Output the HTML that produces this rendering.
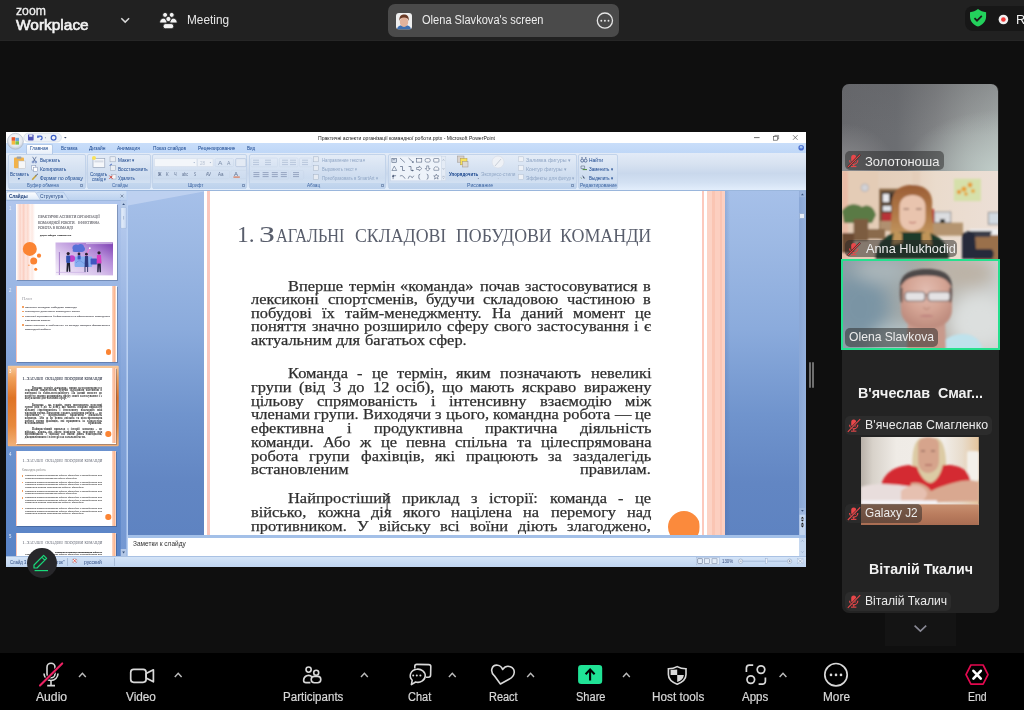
<!DOCTYPE html>
<html><head><meta charset="utf-8">
<style>
*{margin:0;padding:0;box-sizing:border-box}
html,body{width:1024px;height:710px;overflow:hidden;background:#0f0f0f;font-family:"Liberation Sans",sans-serif;position:relative}
.a{position:absolute}
svg{position:absolute;overflow:visible}
</style></head>
<body>
<div class="a" style="left:0;top:0;width:1024px;height:41px;background:#212121;border-bottom:1px solid #262626"></div>
<div class="a" style="left:15.90px;top:4.13px;font-size:100.8px;line-height:100.8px;white-space:pre;color:#f0f0f0;font-weight:normal;font-family:'Liberation Sans',sans-serif;transform-origin:0 0;transform:scale(0.12131,0.12500);-webkit-text-stroke:2.5px #f0f0f0;">zoom</div>
<div class="a" style="left:15.90px;top:16.93px;font-size:121.6px;line-height:121.6px;white-space:pre;color:#f2f2f2;font-weight:normal;font-family:'Liberation Sans',sans-serif;transform-origin:0 0;transform:scale(0.12706,0.12500);-webkit-text-stroke:5px #f2f2f2;">Workplace</div>
<svg style="left:0;top:0" width="1024" height="41"><path d="M121.3 18.2 L125.2 22.1 L129.1 18.2" fill="none" stroke="#d8d8d8" stroke-width="1.5"/><g fill="#f4f4f4" stroke="#212121" stroke-width=".9"><circle cx="165.1" cy="14.9" r="2.5"/><circle cx="171.7" cy="14.9" r="2.5"/><path d="M159.6 23 C159.6 19.4 162 18.2 163.4 18.2 C165 18.2 167 19.4 167 23 z"/><path d="M169.8 23 C169.8 19.4 171.8 18.2 173.4 18.2 C174.8 18.2 177.2 19.4 177.2 23 z"/><circle cx="168.4" cy="19" r="2.6"/><rect x="163" y="23.6" width="10.8" height="5.2" rx="2.6"/></g></svg>
<div class="a" style="left:186.50px;top:14.14px;font-size:96px;line-height:96px;white-space:pre;color:#e8e8e8;font-weight:normal;font-family:'Liberation Sans',sans-serif;transform-origin:0 0;transform:scale(0.12328,0.12500);">Meeting</div>
<div class="a" style="left:388px;top:4px;width:231px;height:33px;background:#4a4a4a;border-radius:7px"></div>
<svg style="left:395.6px;top:12.7px" width="16" height="16.6" viewBox="0 0 16 16.6"><defs><clipPath id="avc"><rect width="16" height="16.6" rx="3"/></clipPath><filter id="avb"><feGaussianBlur stdDeviation=".35"/></filter></defs><g clip-path="url(#avc)"><rect width="16" height="16.6" fill="#efefef"/><g filter="url(#avb)"><path d="M1 16.6 C1.5 13 4 12 8 12 C12 12 14.5 13 15 16.6 Z" fill="#3f6fb0"/><ellipse cx="8" cy="9" rx="4.2" ry="5" fill="#e2b39c"/><path d="M3.4 8 C3 3.6 5 1.6 8 1.6 C11 1.6 13.2 3.4 12.8 8 C12 5.4 10.6 4.6 8 4.6 C5.4 4.6 4 5.4 3.4 8 Z" fill="#6b3a26"/></g></g></svg>
<div class="a" style="left:421.50px;top:14.24px;font-size:96px;line-height:96px;white-space:pre;color:#ececec;font-weight:normal;font-family:'Liberation Sans',sans-serif;transform-origin:0 0;transform:scale(0.11533,0.12500);">Olena Slavkova's screen</div>
<svg style="left:0;top:0" width="1024" height="41"><circle cx="604.9" cy="20.6" r="7.6" fill="none" stroke="#e6e6e6" stroke-width="1.3"/><circle cx="601.3" cy="20.8" r="0.95" fill="#e6e6e6"/><circle cx="604.9" cy="20.8" r="0.95" fill="#e6e6e6"/><circle cx="608.5" cy="20.8" r="0.95" fill="#e6e6e6"/></svg>
<div class="a" style="left:965px;top:6px;width:80px;height:25px;background:#171717;border-radius:8px"></div>
<svg style="left:0;top:0" width="1024" height="41"><path d="M978 9.1 C980.5 11 983 11.8 986.1 12.3 L986.1 16.5 C986.1 21.5 982.5 25 978 26.6 C973.5 25 970 21.5 970 16.5 L970 12.3 C973 11.8 975.5 11 978 9.1 Z" fill="#23d15c"/><path d="M974.5 18.2 L977 20.7 L981.8 15.9" fill="none" stroke="#1a1a1a" stroke-width="1.7"/><circle cx="1003.4" cy="19.5" r="4.8" fill="#f0f0f0"/><circle cx="1003.4" cy="19.5" r="2.3" fill="#f23a3a"/></svg>
<div class="a" style="left:1015.60px;top:13.02px;font-size:100.0px;line-height:100.0px;white-space:pre;color:#f0f0f0;font-weight:normal;font-family:'Liberation Sans',sans-serif;transform-origin:0 0;transform:scale(0.12830,0.12500);">Re</div>
<div class="a" style="left:0;top:0;width:1024px;height:710px;clip-path:inset(132px 218px 143px 6px);will-change:transform">
<div class="a" style="left:6px;top:132px;width:800px;height:435px;background:#fff"></div>
<div class="a" style="left:6px;top:143px;width:800px;height:10px;background:linear-gradient(#c9defa,#bfd7f7)"></div>
<div class="a" style="left:6px;top:153px;width:800px;height:37px;background:linear-gradient(#e3ebf7 0%,#d7e2f1 30%,#c9d8ec 55%,#d3e1f3 80%,#e3eefc 100%)"></div>
<div class="a" style="left:6px;top:190px;width:800px;height:1px;background:#9ab6dc"></div>
<div class="a" style="left:6px;top:191px;width:121px;height:366px;background:linear-gradient(#a2bde6,#8eaadb 50%,#7f9fd3)"></div>
<div class="a" style="left:127px;top:191px;width:1px;height:366px;background:#b9d0f2"></div>
<div class="a" style="left:128px;top:191px;width:672px;height:344px;background:linear-gradient(#a6c0e9 0%,#9db9e4 15%,#8babdc 40%,#7094cd 65%,#6286c3 85%,#5e83c1 100%)"></div>
<svg style="left:0;top:0" width="1024" height="710"><path d="M128 191 L204 191 L204 191.6 L128 205.4 Z" fill="#c3d5f1" opacity=".8"/></svg>
<div class="a" style="left:725px;top:191px;width:5px;height:344px;background:linear-gradient(90deg,rgba(60,90,150,.18),rgba(60,90,150,0))"></div>
<div class="a" style="left:799px;top:191px;width:7px;height:345px;background:linear-gradient(90deg,#8aa7d6,#95b1dd)"></div>
<div class="a" style="left:799.4px;top:213px;width:6px;height:6px;background:#e8eef8;border:.5px solid #9ab2d6"></div>
<div class="a" style="left:128px;top:535px;width:678px;height:3px;background:#a3c0e8"></div>
<div class="a" style="left:128px;top:538px;width:671px;height:18px;background:#fff"></div>
<div class="a" style="left:799px;top:538px;width:7px;height:18px;background:#c6d8f0"></div>
<div class="a" style="left:6px;top:556px;width:800px;height:11px;background:linear-gradient(#d6e5f8,#c0d5f0)"></div>
<div class="a" style="left:204px;top:191px;width:521px;height:344px;background:#fff"></div>
<div class="a" style="left:207px;top:191px;width:2.5px;height:344px;background:#fbc7bd"></div>
<div class="a" style="left:701.7px;top:191px;width:2.3px;height:344px;background:#fcc9bd"></div>
<div class="a" style="left:707px;top:191px;width:17.6px;height:344px;background:linear-gradient(90deg,#fcd3c5 0,#fcd3c5 25%,#fac5b3 25%,#fac5b3 45%,#fccfc0 45%,#fccfc0 70%,#fbc4b2 70%,#fbc4b2 85%,#fdd0c2 85%)"></div>
<div class="a" style="left:667.5px;top:511px;width:32px;height:32px;border-radius:50%;background:#fb8a3c;clip-path:inset(0 0 8px 0)"></div>
<div class="a" style="left:237.20px;top:222.22px;font-size:188.0px;line-height:188.0px;white-space:pre;color:#595e6c;font-weight:normal;font-family:'Liberation Serif',serif;transform-origin:0 0;transform:scale(0.12500,0.12500);">1.</div>
<div class="a" style="left:259.00px;top:222.22px;font-size:188.0px;line-height:188.0px;white-space:pre;color:#595e6c;font-weight:normal;font-family:'Liberation Serif',serif;transform-origin:0 0;transform:scale(0.16989,0.12500);">З</div>
<div class="a" style="left:275.50px;top:226.99px;font-size:142.4px;line-height:142.4px;white-space:pre;color:#595e6c;font-weight:normal;font-family:'Liberation Serif',serif;transform-origin:0 0;transform:scale(0.11379,0.12500);">АГАЛЬНІ</div>
<div class="a" style="left:354.60px;top:226.99px;font-size:142.4px;line-height:142.4px;white-space:pre;color:#595e6c;font-weight:normal;font-family:'Liberation Serif',serif;transform-origin:0 0;transform:scale(0.12476,0.12500);">СКЛАДОВІ</div>
<div class="a" style="left:456.00px;top:226.99px;font-size:142.4px;line-height:142.4px;white-space:pre;color:#595e6c;font-weight:normal;font-family:'Liberation Serif',serif;transform-origin:0 0;transform:scale(0.12483,0.12500);">ПОБУДОВИ</div>
<div class="a" style="left:560.30px;top:226.99px;font-size:142.4px;line-height:142.4px;white-space:pre;color:#595e6c;font-weight:normal;font-family:'Liberation Serif',serif;transform-origin:0 0;transform:scale(0.12566,0.12500);">КОМАНДИ</div>
<div class="a" style="left:287.70px;top:277.65px;font-size:120.8px;line-height:120.8px;white-space:pre;color:#2e2e2e;font-weight:normal;font-family:'Liberation Serif',serif;transform-origin:0 0;transform:scale(0.13583,0.12500);-webkit-text-stroke:2.0px #2e2e2e;">Вперше</div>
<div class="a" style="left:348.55px;top:277.65px;font-size:120.8px;line-height:120.8px;white-space:pre;color:#2e2e2e;font-weight:normal;font-family:'Liberation Serif',serif;transform-origin:0 0;transform:scale(0.13583,0.12500);-webkit-text-stroke:2.0px #2e2e2e;">термін</div>
<div class="a" style="left:400.39px;top:277.65px;font-size:120.8px;line-height:120.8px;white-space:pre;color:#2e2e2e;font-weight:normal;font-family:'Liberation Serif',serif;transform-origin:0 0;transform:scale(0.13583,0.12500);-webkit-text-stroke:2.0px #2e2e2e;">«команда»</div>
<div class="a" style="left:479.51px;top:277.65px;font-size:120.8px;line-height:120.8px;white-space:pre;color:#2e2e2e;font-weight:normal;font-family:'Liberation Serif',serif;transform-origin:0 0;transform:scale(0.13583,0.12500);-webkit-text-stroke:2.0px #2e2e2e;">почав</div>
<div class="a" style="left:525.07px;top:277.65px;font-size:120.8px;line-height:120.8px;white-space:pre;color:#2e2e2e;font-weight:normal;font-family:'Liberation Serif',serif;transform-origin:0 0;transform:scale(0.13583,0.12500);-webkit-text-stroke:2.0px #2e2e2e;">застосовуватися</div>
<div class="a" style="left:643.45px;top:277.65px;font-size:120.8px;line-height:120.8px;white-space:pre;color:#2e2e2e;font-weight:normal;font-family:'Liberation Serif',serif;transform-origin:0 0;transform:scale(0.13583,0.12500);-webkit-text-stroke:2.0px #2e2e2e;">в</div>
<div class="a" style="left:251.30px;top:291.25px;font-size:120.8px;line-height:120.8px;white-space:pre;color:#2e2e2e;font-weight:normal;font-family:'Liberation Serif',serif;transform-origin:0 0;transform:scale(0.13583,0.12500);-webkit-text-stroke:2.0px #2e2e2e;">лексиконі</div>
<div class="a" style="left:327.63px;top:291.25px;font-size:120.8px;line-height:120.8px;white-space:pre;color:#2e2e2e;font-weight:normal;font-family:'Liberation Serif',serif;transform-origin:0 0;transform:scale(0.13583,0.12500);-webkit-text-stroke:2.0px #2e2e2e;">спортсменів,</div>
<div class="a" style="left:425.94px;top:291.25px;font-size:120.8px;line-height:120.8px;white-space:pre;color:#2e2e2e;font-weight:normal;font-family:'Liberation Serif',serif;transform-origin:0 0;transform:scale(0.13583,0.12500);-webkit-text-stroke:2.0px #2e2e2e;">будучи</div>
<div class="a" style="left:482.97px;top:291.25px;font-size:120.8px;line-height:120.8px;white-space:pre;color:#2e2e2e;font-weight:normal;font-family:'Liberation Serif',serif;transform-origin:0 0;transform:scale(0.13583,0.12500);-webkit-text-stroke:2.0px #2e2e2e;">складовою</div>
<div class="a" style="left:566.89px;top:291.25px;font-size:120.8px;line-height:120.8px;white-space:pre;color:#2e2e2e;font-weight:normal;font-family:'Liberation Serif',serif;transform-origin:0 0;transform:scale(0.13583,0.12500);-webkit-text-stroke:2.0px #2e2e2e;">частиною</div>
<div class="a" style="left:643.45px;top:291.25px;font-size:120.8px;line-height:120.8px;white-space:pre;color:#2e2e2e;font-weight:normal;font-family:'Liberation Serif',serif;transform-origin:0 0;transform:scale(0.13583,0.12500);-webkit-text-stroke:2.0px #2e2e2e;">в</div>
<div class="a" style="left:251.30px;top:304.85px;font-size:120.8px;line-height:120.8px;white-space:pre;color:#2e2e2e;font-weight:normal;font-family:'Liberation Serif',serif;transform-origin:0 0;transform:scale(0.13583,0.12500);-webkit-text-stroke:2.0px #2e2e2e;">побудові</div>
<div class="a" style="left:322.17px;top:304.85px;font-size:120.8px;line-height:120.8px;white-space:pre;color:#2e2e2e;font-weight:normal;font-family:'Liberation Serif',serif;transform-origin:0 0;transform:scale(0.13583,0.12500);-webkit-text-stroke:2.0px #2e2e2e;">їх</div>
<div class="a" style="left:345.06px;top:304.85px;font-size:120.8px;line-height:120.8px;white-space:pre;color:#2e2e2e;font-weight:normal;font-family:'Liberation Serif',serif;transform-origin:0 0;transform:scale(0.13583,0.12500);-webkit-text-stroke:2.0px #2e2e2e;">тайм-менеджменту.</div>
<div class="a" style="left:491.74px;top:304.85px;font-size:120.8px;line-height:120.8px;white-space:pre;color:#2e2e2e;font-weight:normal;font-family:'Liberation Serif',serif;transform-origin:0 0;transform:scale(0.13583,0.12500);-webkit-text-stroke:2.0px #2e2e2e;">На</div>
<div class="a" style="left:521.01px;top:304.85px;font-size:120.8px;line-height:120.8px;white-space:pre;color:#2e2e2e;font-weight:normal;font-family:'Liberation Serif',serif;transform-origin:0 0;transform:scale(0.13583,0.12500);-webkit-text-stroke:2.0px #2e2e2e;">даний</div>
<div class="a" style="left:573.11px;top:304.85px;font-size:120.8px;line-height:120.8px;white-space:pre;color:#2e2e2e;font-weight:normal;font-family:'Liberation Serif',serif;transform-origin:0 0;transform:scale(0.13583,0.12500);-webkit-text-stroke:2.0px #2e2e2e;">момент</div>
<div class="a" style="left:635.14px;top:304.85px;font-size:120.8px;line-height:120.8px;white-space:pre;color:#2e2e2e;font-weight:normal;font-family:'Liberation Serif',serif;transform-origin:0 0;transform:scale(0.13583,0.12500);-webkit-text-stroke:2.0px #2e2e2e;">це</div>
<div class="a" style="left:251.30px;top:318.45px;font-size:120.8px;line-height:120.8px;white-space:pre;color:#2e2e2e;font-weight:normal;font-family:'Liberation Serif',serif;transform-origin:0 0;transform:scale(0.13583,0.12500);-webkit-text-stroke:2.0px #2e2e2e;">поняття</div>
<div class="a" style="left:311.64px;top:318.45px;font-size:120.8px;line-height:120.8px;white-space:pre;color:#2e2e2e;font-weight:normal;font-family:'Liberation Serif',serif;transform-origin:0 0;transform:scale(0.13583,0.12500);-webkit-text-stroke:2.0px #2e2e2e;">значно</div>
<div class="a" style="left:364.11px;top:318.45px;font-size:120.8px;line-height:120.8px;white-space:pre;color:#2e2e2e;font-weight:normal;font-family:'Liberation Serif',serif;transform-origin:0 0;transform:scale(0.13583,0.12500);-webkit-text-stroke:2.0px #2e2e2e;">розширило</div>
<div class="a" style="left:447.15px;top:318.45px;font-size:120.8px;line-height:120.8px;white-space:pre;color:#2e2e2e;font-weight:normal;font-family:'Liberation Serif',serif;transform-origin:0 0;transform:scale(0.13583,0.12500);-webkit-text-stroke:2.0px #2e2e2e;">сферу</div>
<div class="a" style="left:494.09px;top:318.45px;font-size:120.8px;line-height:120.8px;white-space:pre;color:#2e2e2e;font-weight:normal;font-family:'Liberation Serif',serif;transform-origin:0 0;transform:scale(0.13583,0.12500);-webkit-text-stroke:2.0px #2e2e2e;">свого</div>
<div class="a" style="left:537.09px;top:318.45px;font-size:120.8px;line-height:120.8px;white-space:pre;color:#2e2e2e;font-weight:normal;font-family:'Liberation Serif',serif;transform-origin:0 0;transform:scale(0.13583,0.12500);-webkit-text-stroke:2.0px #2e2e2e;">застосування</div>
<div class="a" style="left:634.25px;top:318.45px;font-size:120.8px;line-height:120.8px;white-space:pre;color:#2e2e2e;font-weight:normal;font-family:'Liberation Serif',serif;transform-origin:0 0;transform:scale(0.13583,0.12500);-webkit-text-stroke:2.0px #2e2e2e;">і</div>
<div class="a" style="left:644.16px;top:318.45px;font-size:120.8px;line-height:120.8px;white-space:pre;color:#2e2e2e;font-weight:normal;font-family:'Liberation Serif',serif;transform-origin:0 0;transform:scale(0.13583,0.12500);-webkit-text-stroke:2.0px #2e2e2e;">є</div>
<div class="a" style="left:251.30px;top:332.05px;font-size:120.8px;line-height:120.8px;white-space:pre;color:#2e2e2e;font-weight:normal;font-family:'Liberation Serif',serif;transform-origin:0 0;transform:scale(0.13583,0.12500);-webkit-text-stroke:2.0px #2e2e2e;">актуальним</div>
<div class="a" style="left:336.43px;top:332.05px;font-size:120.8px;line-height:120.8px;white-space:pre;color:#2e2e2e;font-weight:normal;font-family:'Liberation Serif',serif;transform-origin:0 0;transform:scale(0.13583,0.12500);-webkit-text-stroke:2.0px #2e2e2e;">для</div>
<div class="a" style="left:364.62px;top:332.05px;font-size:120.8px;line-height:120.8px;white-space:pre;color:#2e2e2e;font-weight:normal;font-family:'Liberation Serif',serif;transform-origin:0 0;transform:scale(0.13583,0.12500);-webkit-text-stroke:2.0px #2e2e2e;">багатьох</div>
<div class="a" style="left:428.59px;top:332.05px;font-size:120.8px;line-height:120.8px;white-space:pre;color:#2e2e2e;font-weight:normal;font-family:'Liberation Serif',serif;transform-origin:0 0;transform:scale(0.13583,0.12500);-webkit-text-stroke:2.0px #2e2e2e;">сфер.</div>
<div class="a" style="left:287.70px;top:365.05px;font-size:120.8px;line-height:120.8px;white-space:pre;color:#2e2e2e;font-weight:normal;font-family:'Liberation Serif',serif;transform-origin:0 0;transform:scale(0.13583,0.12500);-webkit-text-stroke:2.0px #2e2e2e;">Команда</div>
<div class="a" style="left:356.93px;top:365.05px;font-size:120.8px;line-height:120.8px;white-space:pre;color:#2e2e2e;font-weight:normal;font-family:'Liberation Serif',serif;transform-origin:0 0;transform:scale(0.13583,0.12500);-webkit-text-stroke:2.0px #2e2e2e;">-</div>
<div class="a" style="left:371.64px;top:365.05px;font-size:120.8px;line-height:120.8px;white-space:pre;color:#2e2e2e;font-weight:normal;font-family:'Liberation Serif',serif;transform-origin:0 0;transform:scale(0.13583,0.12500);-webkit-text-stroke:2.0px #2e2e2e;">це</div>
<div class="a" style="left:396.94px;top:365.05px;font-size:120.8px;line-height:120.8px;white-space:pre;color:#2e2e2e;font-weight:normal;font-family:'Liberation Serif',serif;transform-origin:0 0;transform:scale(0.13583,0.12500);-webkit-text-stroke:2.0px #2e2e2e;">термін,</div>
<div class="a" style="left:456.42px;top:365.05px;font-size:120.8px;line-height:120.8px;white-space:pre;color:#2e2e2e;font-weight:normal;font-family:'Liberation Serif',serif;transform-origin:0 0;transform:scale(0.13583,0.12500);-webkit-text-stroke:2.0px #2e2e2e;">яким</div>
<div class="a" style="left:500.35px;top:365.05px;font-size:120.8px;line-height:120.8px;white-space:pre;color:#2e2e2e;font-weight:normal;font-family:'Liberation Serif',serif;transform-origin:0 0;transform:scale(0.13583,0.12500);-webkit-text-stroke:2.0px #2e2e2e;">позначають</div>
<div class="a" style="left:590.70px;top:365.05px;font-size:120.8px;line-height:120.8px;white-space:pre;color:#2e2e2e;font-weight:normal;font-family:'Liberation Serif',serif;transform-origin:0 0;transform:scale(0.13583,0.12500);-webkit-text-stroke:2.0px #2e2e2e;">невеликі</div>
<div class="a" style="left:251.30px;top:378.80px;font-size:120.8px;line-height:120.8px;white-space:pre;color:#2e2e2e;font-weight:normal;font-family:'Liberation Serif',serif;transform-origin:0 0;transform:scale(0.13583,0.12500);-webkit-text-stroke:2.0px #2e2e2e;">групи</div>
<div class="a" style="left:299.24px;top:378.80px;font-size:120.8px;line-height:120.8px;white-space:pre;color:#2e2e2e;font-weight:normal;font-family:'Liberation Serif',serif;transform-origin:0 0;transform:scale(0.13583,0.12500);-webkit-text-stroke:2.0px #2e2e2e;">(від</div>
<div class="a" style="left:332.82px;top:378.80px;font-size:120.8px;line-height:120.8px;white-space:pre;color:#2e2e2e;font-weight:normal;font-family:'Liberation Serif',serif;transform-origin:0 0;transform:scale(0.13583,0.12500);-webkit-text-stroke:2.0px #2e2e2e;">3</div>
<div class="a" style="left:348.49px;top:378.80px;font-size:120.8px;line-height:120.8px;white-space:pre;color:#2e2e2e;font-weight:normal;font-family:'Liberation Serif',serif;transform-origin:0 0;transform:scale(0.13583,0.12500);-webkit-text-stroke:2.0px #2e2e2e;">до</div>
<div class="a" style="left:372.50px;top:378.80px;font-size:120.8px;line-height:120.8px;white-space:pre;color:#2e2e2e;font-weight:normal;font-family:'Liberation Serif',serif;transform-origin:0 0;transform:scale(0.13583,0.12500);-webkit-text-stroke:2.0px #2e2e2e;">12</div>
<div class="a" style="left:396.37px;top:378.80px;font-size:120.8px;line-height:120.8px;white-space:pre;color:#2e2e2e;font-weight:normal;font-family:'Liberation Serif',serif;transform-origin:0 0;transform:scale(0.13583,0.12500);-webkit-text-stroke:2.0px #2e2e2e;">осіб),</div>
<div class="a" style="left:442.20px;top:378.80px;font-size:120.8px;line-height:120.8px;white-space:pre;color:#2e2e2e;font-weight:normal;font-family:'Liberation Serif',serif;transform-origin:0 0;transform:scale(0.13583,0.12500);-webkit-text-stroke:2.0px #2e2e2e;">що</div>
<div class="a" style="left:470.49px;top:378.80px;font-size:120.8px;line-height:120.8px;white-space:pre;color:#2e2e2e;font-weight:normal;font-family:'Liberation Serif',serif;transform-origin:0 0;transform:scale(0.13583,0.12500);-webkit-text-stroke:2.0px #2e2e2e;">мають</div>
<div class="a" style="left:522.20px;top:378.80px;font-size:120.8px;line-height:120.8px;white-space:pre;color:#2e2e2e;font-weight:normal;font-family:'Liberation Serif',serif;transform-origin:0 0;transform:scale(0.13583,0.12500);-webkit-text-stroke:2.0px #2e2e2e;">яскраво</div>
<div class="a" style="left:583.79px;top:378.80px;font-size:120.8px;line-height:120.8px;white-space:pre;color:#2e2e2e;font-weight:normal;font-family:'Liberation Serif',serif;transform-origin:0 0;transform:scale(0.13583,0.12500);-webkit-text-stroke:2.0px #2e2e2e;">виражену</div>
<div class="a" style="left:251.30px;top:392.55px;font-size:120.8px;line-height:120.8px;white-space:pre;color:#2e2e2e;font-weight:normal;font-family:'Liberation Serif',serif;transform-origin:0 0;transform:scale(0.13583,0.12500);-webkit-text-stroke:2.0px #2e2e2e;">цільову</div>
<div class="a" style="left:317.26px;top:392.55px;font-size:120.8px;line-height:120.8px;white-space:pre;color:#2e2e2e;font-weight:normal;font-family:'Liberation Serif',serif;transform-origin:0 0;transform:scale(0.13583,0.12500);-webkit-text-stroke:2.0px #2e2e2e;">спрямованість</div>
<div class="a" style="left:431.10px;top:392.55px;font-size:120.8px;line-height:120.8px;white-space:pre;color:#2e2e2e;font-weight:normal;font-family:'Liberation Serif',serif;transform-origin:0 0;transform:scale(0.13583,0.12500);-webkit-text-stroke:2.0px #2e2e2e;">і</div>
<div class="a" style="left:449.01px;top:392.55px;font-size:120.8px;line-height:120.8px;white-space:pre;color:#2e2e2e;font-weight:normal;font-family:'Liberation Serif',serif;transform-origin:0 0;transform:scale(0.13583,0.12500);-webkit-text-stroke:2.0px #2e2e2e;">інтенсивну</div>
<div class="a" style="left:539.74px;top:392.55px;font-size:120.8px;line-height:120.8px;white-space:pre;color:#2e2e2e;font-weight:normal;font-family:'Liberation Serif',serif;transform-origin:0 0;transform:scale(0.13583,0.12500);-webkit-text-stroke:2.0px #2e2e2e;">взаємодію</div>
<div class="a" style="left:624.92px;top:392.55px;font-size:120.8px;line-height:120.8px;white-space:pre;color:#2e2e2e;font-weight:normal;font-family:'Liberation Serif',serif;transform-origin:0 0;transform:scale(0.13583,0.12500);-webkit-text-stroke:2.0px #2e2e2e;">між</div>
<div class="a" style="left:251.30px;top:406.30px;font-size:120.8px;line-height:120.8px;white-space:pre;color:#2e2e2e;font-weight:normal;font-family:'Liberation Serif',serif;transform-origin:0 0;transform:scale(0.13583,0.12500);-webkit-text-stroke:2.0px #2e2e2e;">членами</div>
<div class="a" style="left:314.40px;top:406.30px;font-size:120.8px;line-height:120.8px;white-space:pre;color:#2e2e2e;font-weight:normal;font-family:'Liberation Serif',serif;transform-origin:0 0;transform:scale(0.13583,0.12500);-webkit-text-stroke:2.0px #2e2e2e;">групи.</div>
<div class="a" style="left:363.13px;top:406.30px;font-size:120.8px;line-height:120.8px;white-space:pre;color:#2e2e2e;font-weight:normal;font-family:'Liberation Serif',serif;transform-origin:0 0;transform:scale(0.13583,0.12500);-webkit-text-stroke:2.0px #2e2e2e;">Виходячи</div>
<div class="a" style="left:435.24px;top:406.30px;font-size:120.8px;line-height:120.8px;white-space:pre;color:#2e2e2e;font-weight:normal;font-family:'Liberation Serif',serif;transform-origin:0 0;transform:scale(0.13583,0.12500);-webkit-text-stroke:2.0px #2e2e2e;">з</div>
<div class="a" style="left:445.87px;top:406.30px;font-size:120.8px;line-height:120.8px;white-space:pre;color:#2e2e2e;font-weight:normal;font-family:'Liberation Serif',serif;transform-origin:0 0;transform:scale(0.13583,0.12500);-webkit-text-stroke:2.0px #2e2e2e;">цього,</div>
<div class="a" style="left:493.11px;top:406.30px;font-size:120.8px;line-height:120.8px;white-space:pre;color:#2e2e2e;font-weight:normal;font-family:'Liberation Serif',serif;transform-origin:0 0;transform:scale(0.13583,0.12500);-webkit-text-stroke:2.0px #2e2e2e;">командна</div>
<div class="a" style="left:563.04px;top:406.30px;font-size:120.8px;line-height:120.8px;white-space:pre;color:#2e2e2e;font-weight:normal;font-family:'Liberation Serif',serif;transform-origin:0 0;transform:scale(0.13583,0.12500);-webkit-text-stroke:2.0px #2e2e2e;">робота</div>
<div class="a" style="left:614.58px;top:406.30px;font-size:120.8px;line-height:120.8px;white-space:pre;color:#2e2e2e;font-weight:normal;font-family:'Liberation Serif',serif;transform-origin:0 0;transform:scale(0.13583,0.12500);-webkit-text-stroke:2.0px #2e2e2e;">—</div>
<div class="a" style="left:635.14px;top:406.30px;font-size:120.8px;line-height:120.8px;white-space:pre;color:#2e2e2e;font-weight:normal;font-family:'Liberation Serif',serif;transform-origin:0 0;transform:scale(0.13583,0.12500);-webkit-text-stroke:2.0px #2e2e2e;">це</div>
<div class="a" style="left:251.30px;top:420.05px;font-size:120.8px;line-height:120.8px;white-space:pre;color:#2e2e2e;font-weight:normal;font-family:'Liberation Serif',serif;transform-origin:0 0;transform:scale(0.13583,0.12500);-webkit-text-stroke:2.0px #2e2e2e;">ефективна</div>
<div class="a" style="left:346.70px;top:420.05px;font-size:120.8px;line-height:120.8px;white-space:pre;color:#2e2e2e;font-weight:normal;font-family:'Liberation Serif',serif;transform-origin:0 0;transform:scale(0.13583,0.12500);-webkit-text-stroke:2.0px #2e2e2e;">і</div>
<div class="a" style="left:373.75px;top:420.05px;font-size:120.8px;line-height:120.8px;white-space:pre;color:#2e2e2e;font-weight:normal;font-family:'Liberation Serif',serif;transform-origin:0 0;transform:scale(0.13583,0.12500);-webkit-text-stroke:2.0px #2e2e2e;">продуктивна</div>
<div class="a" style="left:485.02px;top:420.05px;font-size:120.8px;line-height:120.8px;white-space:pre;color:#2e2e2e;font-weight:normal;font-family:'Liberation Serif',serif;transform-origin:0 0;transform:scale(0.13583,0.12500);-webkit-text-stroke:2.0px #2e2e2e;">практична</div>
<div class="a" style="left:579.80px;top:420.05px;font-size:120.8px;line-height:120.8px;white-space:pre;color:#2e2e2e;font-weight:normal;font-family:'Liberation Serif',serif;transform-origin:0 0;transform:scale(0.13583,0.12500);-webkit-text-stroke:2.0px #2e2e2e;">діяльність</div>
<div class="a" style="left:251.30px;top:433.80px;font-size:120.8px;line-height:120.8px;white-space:pre;color:#2e2e2e;font-weight:normal;font-family:'Liberation Serif',serif;transform-origin:0 0;transform:scale(0.13583,0.12500);-webkit-text-stroke:2.0px #2e2e2e;">команди.</div>
<div class="a" style="left:323.17px;top:433.80px;font-size:120.8px;line-height:120.8px;white-space:pre;color:#2e2e2e;font-weight:normal;font-family:'Liberation Serif',serif;transform-origin:0 0;transform:scale(0.13583,0.12500);-webkit-text-stroke:2.0px #2e2e2e;">Або</div>
<div class="a" style="left:360.02px;top:433.80px;font-size:120.8px;line-height:120.8px;white-space:pre;color:#2e2e2e;font-weight:normal;font-family:'Liberation Serif',serif;transform-origin:0 0;transform:scale(0.13583,0.12500);-webkit-text-stroke:2.0px #2e2e2e;">ж</div>
<div class="a" style="left:380.63px;top:433.80px;font-size:120.8px;line-height:120.8px;white-space:pre;color:#2e2e2e;font-weight:normal;font-family:'Liberation Serif',serif;transform-origin:0 0;transform:scale(0.13583,0.12500);-webkit-text-stroke:2.0px #2e2e2e;">це</div>
<div class="a" style="left:405.97px;top:433.80px;font-size:120.8px;line-height:120.8px;white-space:pre;color:#2e2e2e;font-weight:normal;font-family:'Liberation Serif',serif;transform-origin:0 0;transform:scale(0.13583,0.12500);-webkit-text-stroke:2.0px #2e2e2e;">певна</div>
<div class="a" style="left:455.13px;top:433.80px;font-size:120.8px;line-height:120.8px;white-space:pre;color:#2e2e2e;font-weight:normal;font-family:'Liberation Serif',serif;transform-origin:0 0;transform:scale(0.13583,0.12500);-webkit-text-stroke:2.0px #2e2e2e;">спільна</div>
<div class="a" style="left:516.77px;top:433.80px;font-size:120.8px;line-height:120.8px;white-space:pre;color:#2e2e2e;font-weight:normal;font-family:'Liberation Serif',serif;transform-origin:0 0;transform:scale(0.13583,0.12500);-webkit-text-stroke:2.0px #2e2e2e;">та</div>
<div class="a" style="left:540.70px;top:433.80px;font-size:120.8px;line-height:120.8px;white-space:pre;color:#2e2e2e;font-weight:normal;font-family:'Liberation Serif',serif;transform-origin:0 0;transform:scale(0.13583,0.12500);-webkit-text-stroke:2.0px #2e2e2e;">цілеспрямована</div>
<div class="a" style="left:251.30px;top:447.55px;font-size:120.8px;line-height:120.8px;white-space:pre;color:#2e2e2e;font-weight:normal;font-family:'Liberation Serif',serif;transform-origin:0 0;transform:scale(0.13583,0.12500);-webkit-text-stroke:2.0px #2e2e2e;">робота</div>
<div class="a" style="left:309.41px;top:447.55px;font-size:120.8px;line-height:120.8px;white-space:pre;color:#2e2e2e;font-weight:normal;font-family:'Liberation Serif',serif;transform-origin:0 0;transform:scale(0.13583,0.12500);-webkit-text-stroke:2.0px #2e2e2e;">групи</div>
<div class="a" style="left:360.60px;top:447.55px;font-size:120.8px;line-height:120.8px;white-space:pre;color:#2e2e2e;font-weight:normal;font-family:'Liberation Serif',serif;transform-origin:0 0;transform:scale(0.13583,0.12500);-webkit-text-stroke:2.0px #2e2e2e;">фахівців,</div>
<div class="a" style="left:434.92px;top:447.55px;font-size:120.8px;line-height:120.8px;white-space:pre;color:#2e2e2e;font-weight:normal;font-family:'Liberation Serif',serif;transform-origin:0 0;transform:scale(0.13583,0.12500);-webkit-text-stroke:2.0px #2e2e2e;">які</div>
<div class="a" style="left:465.70px;top:447.55px;font-size:120.8px;line-height:120.8px;white-space:pre;color:#2e2e2e;font-weight:normal;font-family:'Liberation Serif',serif;transform-origin:0 0;transform:scale(0.13583,0.12500);-webkit-text-stroke:2.0px #2e2e2e;">працюють</div>
<div class="a" style="left:548.41px;top:447.55px;font-size:120.8px;line-height:120.8px;white-space:pre;color:#2e2e2e;font-weight:normal;font-family:'Liberation Serif',serif;transform-origin:0 0;transform:scale(0.13583,0.12500);-webkit-text-stroke:2.0px #2e2e2e;">за</div>
<div class="a" style="left:572.89px;top:447.55px;font-size:120.8px;line-height:120.8px;white-space:pre;color:#2e2e2e;font-weight:normal;font-family:'Liberation Serif',serif;transform-origin:0 0;transform:scale(0.13583,0.12500);-webkit-text-stroke:2.0px #2e2e2e;">заздалегідь</div>
<div class="a" style="left:251.30px;top:461.30px;font-size:120.8px;line-height:120.8px;white-space:pre;color:#2e2e2e;font-weight:normal;font-family:'Liberation Serif',serif;transform-origin:0 0;transform:scale(0.13583,0.12500);-webkit-text-stroke:2.0px #2e2e2e;">встановленим</div>
<div class="a" style="left:580.45px;top:461.30px;font-size:120.8px;line-height:120.8px;white-space:pre;color:#2e2e2e;font-weight:normal;font-family:'Liberation Serif',serif;transform-origin:0 0;transform:scale(0.13583,0.12500);-webkit-text-stroke:2.0px #2e2e2e;">правилам.</div>
<div class="a" style="left:287.70px;top:489.65px;font-size:120.8px;line-height:120.8px;white-space:pre;color:#2e2e2e;font-weight:normal;font-family:'Liberation Serif',serif;transform-origin:0 0;transform:scale(0.13583,0.12500);-webkit-text-stroke:2.0px #2e2e2e;">Найпростіший</div>
<div class="a" style="left:401.98px;top:489.65px;font-size:120.8px;line-height:120.8px;white-space:pre;color:#2e2e2e;font-weight:normal;font-family:'Liberation Serif',serif;transform-origin:0 0;transform:scale(0.13583,0.12500);-webkit-text-stroke:2.0px #2e2e2e;">приклад</div>
<div class="a" style="left:471.09px;top:489.65px;font-size:120.8px;line-height:120.8px;white-space:pre;color:#2e2e2e;font-weight:normal;font-family:'Liberation Serif',serif;transform-origin:0 0;transform:scale(0.13583,0.12500);-webkit-text-stroke:2.0px #2e2e2e;">з</div>
<div class="a" style="left:489.13px;top:489.65px;font-size:120.8px;line-height:120.8px;white-space:pre;color:#2e2e2e;font-weight:normal;font-family:'Liberation Serif',serif;transform-origin:0 0;transform:scale(0.13583,0.12500);-webkit-text-stroke:2.0px #2e2e2e;">історії:</div>
<div class="a" style="left:549.56px;top:489.65px;font-size:120.8px;line-height:120.8px;white-space:pre;color:#2e2e2e;font-weight:normal;font-family:'Liberation Serif',serif;transform-origin:0 0;transform:scale(0.13583,0.12500);-webkit-text-stroke:2.0px #2e2e2e;">команда</div>
<div class="a" style="left:618.12px;top:489.65px;font-size:120.8px;line-height:120.8px;white-space:pre;color:#2e2e2e;font-weight:normal;font-family:'Liberation Serif',serif;transform-origin:0 0;transform:scale(0.13583,0.12500);-webkit-text-stroke:2.0px #2e2e2e;">-</div>
<div class="a" style="left:635.14px;top:489.65px;font-size:120.8px;line-height:120.8px;white-space:pre;color:#2e2e2e;font-weight:normal;font-family:'Liberation Serif',serif;transform-origin:0 0;transform:scale(0.13583,0.12500);-webkit-text-stroke:2.0px #2e2e2e;">це</div>
<div class="a" style="left:251.30px;top:503.75px;font-size:120.8px;line-height:120.8px;white-space:pre;color:#2e2e2e;font-weight:normal;font-family:'Liberation Serif',serif;transform-origin:0 0;transform:scale(0.13583,0.12500);-webkit-text-stroke:2.0px #2e2e2e;">військо,</div>
<div class="a" style="left:317.73px;top:503.75px;font-size:120.8px;line-height:120.8px;white-space:pre;color:#2e2e2e;font-weight:normal;font-family:'Liberation Serif',serif;transform-origin:0 0;transform:scale(0.13583,0.12500);-webkit-text-stroke:2.0px #2e2e2e;">кожна</div>
<div class="a" style="left:371.19px;top:503.75px;font-size:120.8px;line-height:120.8px;white-space:pre;color:#2e2e2e;font-weight:normal;font-family:'Liberation Serif',serif;transform-origin:0 0;transform:scale(0.13583,0.12500);-webkit-text-stroke:2.0px #2e2e2e;">дія</div>
<div class="a" style="left:402.78px;top:503.75px;font-size:120.8px;line-height:120.8px;white-space:pre;color:#2e2e2e;font-weight:normal;font-family:'Liberation Serif',serif;transform-origin:0 0;transform:scale(0.13583,0.12500);-webkit-text-stroke:2.0px #2e2e2e;">якого</div>
<div class="a" style="left:451.32px;top:503.75px;font-size:120.8px;line-height:120.8px;white-space:pre;color:#2e2e2e;font-weight:normal;font-family:'Liberation Serif',serif;transform-origin:0 0;transform:scale(0.13583,0.12500);-webkit-text-stroke:2.0px #2e2e2e;">націлена</div>
<div class="a" style="left:523.39px;top:503.75px;font-size:120.8px;line-height:120.8px;white-space:pre;color:#2e2e2e;font-weight:normal;font-family:'Liberation Serif',serif;transform-origin:0 0;transform:scale(0.13583,0.12500);-webkit-text-stroke:2.0px #2e2e2e;">на</div>
<div class="a" style="left:550.59px;top:503.75px;font-size:120.8px;line-height:120.8px;white-space:pre;color:#2e2e2e;font-weight:normal;font-family:'Liberation Serif',serif;transform-origin:0 0;transform:scale(0.13583,0.12500);-webkit-text-stroke:2.0px #2e2e2e;">перемогу</div>
<div class="a" style="left:626.79px;top:503.75px;font-size:120.8px;line-height:120.8px;white-space:pre;color:#2e2e2e;font-weight:normal;font-family:'Liberation Serif',serif;transform-origin:0 0;transform:scale(0.13583,0.12500);-webkit-text-stroke:2.0px #2e2e2e;">над</div>
<div class="a" style="left:251.30px;top:517.85px;font-size:120.8px;line-height:120.8px;white-space:pre;color:#2e2e2e;font-weight:normal;font-family:'Liberation Serif',serif;transform-origin:0 0;transform:scale(0.13583,0.12500);-webkit-text-stroke:2.0px #2e2e2e;">противником.</div>
<div class="a" style="left:357.02px;top:517.85px;font-size:120.8px;line-height:120.8px;white-space:pre;color:#2e2e2e;font-weight:normal;font-family:'Liberation Serif',serif;transform-origin:0 0;transform:scale(0.13583,0.12500);-webkit-text-stroke:2.0px #2e2e2e;">У</div>
<div class="a" style="left:378.61px;top:517.85px;font-size:120.8px;line-height:120.8px;white-space:pre;color:#2e2e2e;font-weight:normal;font-family:'Liberation Serif',serif;transform-origin:0 0;transform:scale(0.13583,0.12500);-webkit-text-stroke:2.0px #2e2e2e;">війську</div>
<div class="a" style="left:440.38px;top:517.85px;font-size:120.8px;line-height:120.8px;white-space:pre;color:#2e2e2e;font-weight:normal;font-family:'Liberation Serif',serif;transform-origin:0 0;transform:scale(0.13583,0.12500);-webkit-text-stroke:2.0px #2e2e2e;">всі</div>
<div class="a" style="left:469.85px;top:517.85px;font-size:120.8px;line-height:120.8px;white-space:pre;color:#2e2e2e;font-weight:normal;font-family:'Liberation Serif',serif;transform-origin:0 0;transform:scale(0.13583,0.12500);-webkit-text-stroke:2.0px #2e2e2e;">воїни</div>
<div class="a" style="left:517.78px;top:517.85px;font-size:120.8px;line-height:120.8px;white-space:pre;color:#2e2e2e;font-weight:normal;font-family:'Liberation Serif',serif;transform-origin:0 0;transform:scale(0.13583,0.12500);-webkit-text-stroke:2.0px #2e2e2e;">діють</div>
<div class="a" style="left:567.35px;top:517.85px;font-size:120.8px;line-height:120.8px;white-space:pre;color:#2e2e2e;font-weight:normal;font-family:'Liberation Serif',serif;transform-origin:0 0;transform:scale(0.13583,0.12500);-webkit-text-stroke:2.0px #2e2e2e;">злагоджено,</div>
<svg style="left:0;top:0" width="1024" height="710"><path d="M385.6 495.2 L388.6 495.2 M387.1 495.2 L387.1 510 M385.6 510 L388.6 510" stroke="#222" stroke-width="0.9" fill="none"/></svg>
</div>
<svg style="left:0;top:0" width="1024" height="710">
<defs><radialGradient id="ob" cx="50%" cy="40%" r="60%"><stop offset="0" stop-color="#ffffff"/><stop offset=".7" stop-color="#e4e8ee"/><stop offset="1" stop-color="#b9c3d1"/></radialGradient></defs>
<circle cx="15.4" cy="141.3" r="8" fill="url(#ob)" stroke="#a9b4c4" stroke-width=".6"/>
<rect x="11.6" y="137.2" width="3.6" height="3.6" fill="#e7582b"/><rect x="15.4" y="137.8" width="3.6" height="3.2" fill="#6ba7d8"/><rect x="11.6" y="141" width="3.6" height="3.6" fill="#f6b73c"/><rect x="15.4" y="141.2" width="3.6" height="3.4" fill="#7cc04b"/>
<rect x="23.8" y="133.2" width="37.6" height="8.8" rx="4.4" fill="#eef3f9" stroke="#c9d3df" stroke-width=".6"/>
<rect x="28" y="134.6" width="5.6" height="5.8" rx=".6" fill="#4f55b8"/><rect x="29.2" y="134.6" width="3.2" height="2.2" fill="#dfe3f5"/>
<path d="M38.2 136.2 L40.6 136.2 Q42.4 136.4 42 138.6 L40.6 140" fill="none" stroke="#3f62c8" stroke-width="1.2"/><path d="M37.2 135.2 L37.2 138 L39.8 137.2 Z" fill="#3f62c8"/>
<circle cx="45.4" cy="137.8" r=".5" fill="#6a7a90"/>
<circle cx="53.6" cy="137.8" r="2.4" fill="none" stroke="#3f62c8" stroke-width="1.2"/>
<path d="M64 137 L66.6 137 L65.3 138.6 Z" fill="#3b4a6a"/>
<path d="M754 137.6 L759.6 137.6" stroke="#333" stroke-width=".7"/>
<rect x="773.6" y="136.4" width="4" height="3.8" fill="none" stroke="#444" stroke-width=".6"/><path d="M774.8 136.4 L774.8 135.4 L778.6 135.4 L778.6 139 L777.6 139" fill="none" stroke="#444" stroke-width=".55"/>
<path d="M793 135.2 L797.6 139.8 M797.6 135.2 L793 139.8" stroke="#444" stroke-width=".65"/>
<circle cx="801.2" cy="147.8" r="2.8" fill="#4a6fd0"/><circle cx="801.2" cy="147.2" r="1.4" fill="#9fc0f0"/>
</svg>
<div class="a" style="left:318.00px;top:134.86px;font-size:44.8px;line-height:44.8px;white-space:pre;color:#1a1a1a;font-weight:normal;font-family:'Liberation Sans',sans-serif;transform-origin:0 0;transform:scale(0.11385,0.12500);">Практичні аспекти організації командної роботи.pptx - Microsoft PowerPoint</div>
<div class="a" style="left:25.8px;top:144px;width:27.2px;height:10px;background:linear-gradient(#ffffff,#e6eef9);border:1px solid #b3c9e8;border-bottom:none;border-radius:2px 2px 0 0"></div>
<div class="a" style="left:30.00px;top:145.23px;font-size:43.2px;line-height:43.2px;white-space:pre;color:#15428b;font-weight:normal;font-family:'Liberation Sans',sans-serif;transform-origin:0 0;transform:scale(0.11069,0.12500);">Главная</div>
<div class="a" style="left:60.60px;top:145.23px;font-size:43.2px;line-height:43.2px;white-space:pre;color:#15428b;font-weight:normal;font-family:'Liberation Sans',sans-serif;transform-origin:0 0;transform:scale(0.10214,0.12500);">Вставка</div>
<div class="a" style="left:89.30px;top:145.23px;font-size:43.2px;line-height:43.2px;white-space:pre;color:#15428b;font-weight:normal;font-family:'Liberation Sans',sans-serif;transform-origin:0 0;transform:scale(0.11364,0.12500);">Дизайн</div>
<div class="a" style="left:117.20px;top:145.23px;font-size:43.2px;line-height:43.2px;white-space:pre;color:#15428b;font-weight:normal;font-family:'Liberation Sans',sans-serif;transform-origin:0 0;transform:scale(0.11243,0.12500);">Анимация</div>
<div class="a" style="left:152.80px;top:145.23px;font-size:43.2px;line-height:43.2px;white-space:pre;color:#15428b;font-weight:normal;font-family:'Liberation Sans',sans-serif;transform-origin:0 0;transform:scale(0.11096,0.12500);">Показ слайдов</div>
<div class="a" style="left:197.70px;top:145.23px;font-size:43.2px;line-height:43.2px;white-space:pre;color:#15428b;font-weight:normal;font-family:'Liberation Sans',sans-serif;transform-origin:0 0;transform:scale(0.11182,0.12500);">Рецензирование</div>
<div class="a" style="left:246.70px;top:145.23px;font-size:43.2px;line-height:43.2px;white-space:pre;color:#15428b;font-weight:normal;font-family:'Liberation Sans',sans-serif;transform-origin:0 0;transform:scale(0.10492,0.12500);">Вид</div>
<div class="a" style="left:7.5px;top:154px;width:78.3px;height:35px;border-radius:2px;background:linear-gradient(#e4ecf7,#d6e2f2 40%,#cddcef 70%,#d8e5f5);border:1px solid #c2d3ea"></div>
<div class="a" style="left:8.5px;top:182.8px;width:76.3px;height:5.8px;background:linear-gradient(#c4d7ee,#bcd1ec)"></div>
<div class="a" style="left:27.20px;top:183.20px;font-size:41.6px;line-height:41.6px;white-space:pre;color:#3b63a0;font-weight:normal;font-family:'Liberation Sans',sans-serif;transform-origin:0 0;transform:scale(0.11251,0.12500);">Буфер обмена</div>
<div class="a" style="left:80.2px;top:184px;width:3px;height:3px;border:.6px solid #7f97bb"></div>
<div class="a" style="left:87.3px;top:154px;width:63.7px;height:35px;border-radius:2px;background:linear-gradient(#e4ecf7,#d6e2f2 40%,#cddcef 70%,#d8e5f5);border:1px solid #c2d3ea"></div>
<div class="a" style="left:88.3px;top:182.8px;width:61.7px;height:5.8px;background:linear-gradient(#c4d7ee,#bcd1ec)"></div>
<div class="a" style="left:111.80px;top:183.20px;font-size:41.6px;line-height:41.6px;white-space:pre;color:#3b63a0;font-weight:normal;font-family:'Liberation Sans',sans-serif;transform-origin:0 0;transform:scale(0.10397,0.12500);">Слайды</div>
<div class="a" style="left:152.2px;top:154px;width:95.20000000000002px;height:35px;border-radius:2px;background:linear-gradient(#e4ecf7,#d6e2f2 40%,#cddcef 70%,#d8e5f5);border:1px solid #c2d3ea"></div>
<div class="a" style="left:153.2px;top:182.8px;width:93.20000000000002px;height:5.8px;background:linear-gradient(#c4d7ee,#bcd1ec)"></div>
<div class="a" style="left:188.40px;top:183.20px;font-size:41.6px;line-height:41.6px;white-space:pre;color:#3b63a0;font-weight:normal;font-family:'Liberation Sans',sans-serif;transform-origin:0 0;transform:scale(0.11325,0.12500);">Шрифт</div>
<div class="a" style="left:241.8px;top:184px;width:3px;height:3px;border:.6px solid #7f97bb"></div>
<div class="a" style="left:248.7px;top:154px;width:137.7px;height:35px;border-radius:2px;background:linear-gradient(#e4ecf7,#d6e2f2 40%,#cddcef 70%,#d8e5f5);border:1px solid #c2d3ea"></div>
<div class="a" style="left:249.7px;top:182.8px;width:135.7px;height:5.8px;background:linear-gradient(#c4d7ee,#bcd1ec)"></div>
<div class="a" style="left:307.30px;top:183.20px;font-size:41.6px;line-height:41.6px;white-space:pre;color:#3b63a0;font-weight:normal;font-family:'Liberation Sans',sans-serif;transform-origin:0 0;transform:scale(0.11226,0.12500);">Абзац</div>
<div class="a" style="left:380.79999999999995px;top:184px;width:3px;height:3px;border:.6px solid #7f97bb"></div>
<div class="a" style="left:388px;top:154px;width:189px;height:35px;border-radius:2px;background:linear-gradient(#e4ecf7,#d6e2f2 40%,#cddcef 70%,#d8e5f5);border:1px solid #c2d3ea"></div>
<div class="a" style="left:389px;top:182.8px;width:187px;height:5.8px;background:linear-gradient(#c4d7ee,#bcd1ec)"></div>
<div class="a" style="left:467.00px;top:183.20px;font-size:41.6px;line-height:41.6px;white-space:pre;color:#3b63a0;font-weight:normal;font-family:'Liberation Sans',sans-serif;transform-origin:0 0;transform:scale(0.12411,0.12500);">Рисование</div>
<div class="a" style="left:571.4px;top:184px;width:3px;height:3px;border:.6px solid #7f97bb"></div>
<div class="a" style="left:578px;top:154px;width:40px;height:35px;border-radius:2px;background:linear-gradient(#e4ecf7,#d6e2f2 40%,#cddcef 70%,#d8e5f5);border:1px solid #c2d3ea"></div>
<div class="a" style="left:579px;top:182.8px;width:38px;height:5.8px;background:linear-gradient(#c4d7ee,#bcd1ec)"></div>
<div class="a" style="left:579.50px;top:183.20px;font-size:41.6px;line-height:41.6px;white-space:pre;color:#3b63a0;font-weight:normal;font-family:'Liberation Sans',sans-serif;transform-origin:0 0;transform:scale(0.11677,0.12500);">Редактирование</div>
<svg style="left:0;top:0" width="1024" height="710">
<rect x="14" y="157.4" width="10" height="10.8" rx="1" fill="#f1b24a"/><rect x="16.6" y="156.4" width="4.8" height="2.4" rx=".8" fill="#9aa3ae"/><rect x="18.6" y="161" width="7" height="7.6" fill="#f7f7f7" stroke="#b7bec9" stroke-width=".5"/>
<path d="M32.6 156.8 L35.4 161.6 M36.2 156.8 L33.4 161.6" stroke="#445a8a" stroke-width=".7"/><circle cx="33" cy="162" r=".9" fill="none" stroke="#3e5ea8" stroke-width=".6"/><circle cx="35.8" cy="162" r=".9" fill="none" stroke="#3e5ea8" stroke-width=".6"/>
<rect x="31.8" y="165.6" width="4" height="4.4" fill="#fff" stroke="#7c8db0" stroke-width=".5"/><rect x="33.6" y="167.2" width="4" height="4.4" fill="#fff" stroke="#7c8db0" stroke-width=".5"/>
<path d="M32.2 179.8 L36.4 175.2" stroke="#caa43a" stroke-width="1.6"/><path d="M35.4 176 L38 173.8" stroke="#5a6c8a" stroke-width="1"/>
<rect x="93" y="158.4" width="11.8" height="9" fill="#f5f7fa" stroke="#8c9bb2" stroke-width=".6"/><rect x="94.4" y="160.4" width="9" height="2" fill="#d7dce6"/><circle cx="94" cy="158" r="2" fill="#f8e25a"/>
<rect x="110" y="156.8" width="5.6" height="5" fill="#e9edf3" stroke="#96a3b8" stroke-width=".5"/>
<rect x="110.4" y="165.6" width="5.2" height="4.8" fill="#e9edf3" stroke="#96a3b8" stroke-width=".5"/><path d="M109.6 165.4 L112 164" stroke="#3156b8" stroke-width=".8"/>
<rect x="111.6" y="174.6" width="4.4" height="4.4" fill="#f3f5f8" stroke="#96a3b8" stroke-width=".5"/><path d="M109.4 175.6 L112.6 178.8 M112.6 175.6 L109.4 178.8" stroke="#d63b2b" stroke-width=".9"/>
<rect x="154.7" y="158.8" width="42.2" height="7.6" fill="#f3f6fa" stroke="#d3dce8" stroke-width=".5"/><rect x="197.6" y="158.8" width="15.4" height="7.6" fill="#eef2f8" stroke="#d3dce8" stroke-width=".5"/>
<path d="M193.4 162 L195 162 L194.2 163.2 Z M209.6 162 L211.2 162 L210.4 163.2 Z" fill="#9fb0c8"/>
<rect x="215.2" y="158.6" width="18.3" height="8" rx="1" fill="none" stroke="#c9d6e8" stroke-width=".5"/><rect x="235.7" y="158.6" width="10.3" height="8" rx="1" fill="#e3eaf4" stroke="#a9bcd8" stroke-width=".6"/>
<rect x="154.7" y="170.4" width="74.8" height="8.2" rx="1" fill="none" stroke="#c9d6e8" stroke-width=".5"/><rect x="231" y="170.4" width="15.4" height="8.2" rx="1" fill="none" stroke="#c9d6e8" stroke-width=".5"/>
<rect x="233.4" y="176.4" width="6.4" height="1.4" fill="#d9856a"/>
<rect x="250.9" y="158" width="26.599999999999994" height="8.800000000000011" rx="1" fill="none" stroke="#c9d6e8" stroke-width=".5"/>
<rect x="279.4" y="158" width="18.600000000000023" height="8.800000000000011" rx="1" fill="none" stroke="#c9d6e8" stroke-width=".5"/>
<rect x="299.5" y="158" width="12.600000000000023" height="8.800000000000011" rx="1" fill="none" stroke="#c9d6e8" stroke-width=".5"/>
<rect x="250.9" y="170.5" width="37.70000000000002" height="8.800000000000011" rx="1" fill="none" stroke="#c9d6e8" stroke-width=".5"/>
<rect x="290.7" y="170.5" width="12.900000000000034" height="8.800000000000011" rx="1" fill="none" stroke="#c9d6e8" stroke-width=".5"/>
<g stroke="#a9b9d1" stroke-width=".7"><path d="M253 160.2 L259 160.2 M253 162.4 L259 162.4 M253 164.6 L259 164.6"/></g>
<g stroke="#a9b9d1" stroke-width=".7"><path d="M265 160.2 L271 160.2 M265 162.4 L271 162.4 M265 164.6 L271 164.6"/></g>
<g stroke="#a9b9d1" stroke-width=".7"><path d="M282 160.2 L288 160.2 M282 162.4 L288 162.4 M282 164.6 L288 164.6"/></g>
<g stroke="#a9b9d1" stroke-width=".7"><path d="M290 160.2 L296 160.2 M290 162.4 L296 162.4 M290 164.6 L296 164.6"/></g>
<g stroke="#a9b9d1" stroke-width=".7"><path d="M302 160.2 L308 160.2 M302 162.4 L308 162.4 M302 164.6 L308 164.6"/></g>
<g stroke="#8596b4" stroke-width=".8"><path d="M253.4 172.6 L259.4 172.6 M253.4 174.6 L259.4 174.6 M253.4 176.6 L259.4 176.6"/></g>
<g stroke="#8596b4" stroke-width=".8"><path d="M262.6 172.6 L268.6 172.6 M262.6 174.6 L268.6 174.6 M262.6 176.6 L268.6 176.6"/></g>
<g stroke="#8596b4" stroke-width=".8"><path d="M271.8 172.6 L277.8 172.6 M271.8 174.6 L277.8 174.6 M271.8 176.6 L277.8 176.6"/></g>
<g stroke="#8596b4" stroke-width=".8"><path d="M280.8 172.6 L286.8 172.6 M280.8 174.6 L286.8 174.6 M280.8 176.6 L286.8 176.6"/></g>
<g stroke="#8596b4" stroke-width=".8"><path d="M293 172.6 L299 172.6 M293 174.6 L299 174.6 M293 176.6 L299 176.6"/></g>
<rect x="313.4" y="156.8" width="5" height="5" fill="#e6ebf2" stroke="#a6b3c6" stroke-width=".5"/>
<rect x="313.4" y="165.6" width="5" height="5" fill="#e6ebf2" stroke="#a6b3c6" stroke-width=".5"/>
<rect x="313.4" y="174.6" width="5" height="5" fill="#e6ebf2" stroke="#a6b3c6" stroke-width=".5"/>
<rect x="390.5" y="156" width="51" height="24.8" fill="#eef3fa" stroke="#c9d6e8" stroke-width=".5"/>
<rect x="391.90000000000003" y="158.3" width="4.8" height="4" fill="#d8e0ec" stroke="#3d4e6c" stroke-width=".5"/><path d="M392.90000000000003 159.70000000000002 L394.90000000000003 159.70000000000002" stroke="#3d4e6c" stroke-width=".5"/><path d="M400.1 158.10000000000002 L404.9 162.5" stroke="#3d4e6c" stroke-width=".6"/><path d="M408.6 158.10000000000002 L413.2 162.3" stroke="#3d4e6c" stroke-width=".6"/><path d="M413.6 162.70000000000002 L411.8 162.5 L413.4 160.9 Z" fill="#3d4e6c"/><rect x="416.59999999999997" y="158.5" width="5.2" height="3.6" fill="#f4f6fa" stroke="#3d4e6c" stroke-width=".5"/><rect x="425.09999999999997" y="158.5" width="5.2" height="3.6" rx="1.6" fill="#f4f6fa" stroke="#3d4e6c" stroke-width=".5"/><rect x="433.7" y="158.5" width="5.2" height="3.6" rx=".6" fill="#f4f6fa" stroke="#3d4e6c" stroke-width=".5"/><path d="M394.3 166.1 L396.7 170.5 L391.90000000000003 170.5 Z" fill="none" stroke="#3d4e6c" stroke-width=".5"/><path d="M400.1 166.5 L402.5 166.5 L402.5 170.5 L404.9 170.5" fill="none" stroke="#3d4e6c" stroke-width=".6"/><path d="M408.6 166.5 L411 166.5 L411 170.5 L413 170.5" fill="none" stroke="#3d4e6c" stroke-width=".6"/><path d="M413.8 170.5 L412.4 169.5 L412.4 171.5 Z" fill="#3d4e6c"/><path d="M416.59999999999997 167.5 L419.2 167.5 L419.2 166.1 L421.8 168.5 L419.2 170.9 L419.2 169.5 L416.59999999999997 169.5 Z" fill="#f4f6fa" stroke="#3d4e6c" stroke-width=".5"/><path d="M426.7 165.9 L428.7 165.9 L428.7 168.5 L430.09999999999997 168.5 L427.7 171.1 L425.3 168.5 L426.7 168.5 Z" fill="#f4f6fa" stroke="#3d4e6c" stroke-width=".5"/><path d="M433.90000000000003 170.3 C433.3 168.1 435.3 165.9 436.7 167.1 C438.3 166.5 439.3 168.5 438.7 170.3 Z" fill="#f4f6fa" stroke="#3d4e6c" stroke-width=".5"/><path d="M393.1 179.1 L393.1 175.7 L396.1 175.7" fill="none" stroke="#3d4e6c" stroke-width=".6"/><path d="M391.90000000000003 176.7 L393.1 174.5 L394.3 176.7 Z" fill="#3d4e6c"/><path d="M399.9 176.1 Q402.5 174.29999999999998 405.1 178.7" fill="none" stroke="#3d4e6c" stroke-width=".6"/><path d="M408.2 178.7 Q409.6 174.29999999999998 411 176.7 Q412.4 179.1 413.8 175.7" fill="none" stroke="#3d4e6c" stroke-width=".6"/><path d="M420.2 174.1 Q418.4 174.29999999999998 418.8 176.7 Q418.4 179.1 420.2 179.29999999999998" fill="none" stroke="#3d4e6c" stroke-width=".6"/><path d="M426.7 174.1 Q428.5 174.29999999999998 428.09999999999997 176.7 Q428.5 179.1 426.7 179.29999999999998" fill="none" stroke="#3d4e6c" stroke-width=".6"/><path d="M436.3 174.1 L437.1 175.89999999999998 L438.90000000000003 175.89999999999998 L437.5 177.1 L438.1 179.1 L436.3 177.89999999999998 L434.5 179.1 L435.1 177.1 L433.7 175.89999999999998 L435.5 175.89999999999998 Z" fill="#f4f6fa" stroke="#3d4e6c" stroke-width=".5"/>
<rect x="441.2" y="156.2" width="4.6" height="24.4" fill="#e4ebf5" stroke="#c6d2e3" stroke-width=".4"/>
<path d="M442.6 160.6 L443.5 159.4 L444.4 160.6 M442.6 168.2 L443.5 169.4 L444.4 168.2 M442.4 176.4 L444.6 176.4 M442.6 177.6 L443.5 178.6 L444.4 177.6" fill="none" stroke="#7d8ca6" stroke-width=".45"/>
<rect x="457.6" y="156" width="6.4" height="6.2" fill="#d9d2cc" stroke="#9a938c" stroke-width=".5"/><rect x="460.6" y="158.6" width="6.4" height="6.2" fill="#f7e25a" stroke="#b79a3c" stroke-width=".5"/><rect x="462.6" y="161.6" width="5.4" height="5.4" fill="#dcd8d4" stroke="#9a938c" stroke-width=".5"/>
<path d="M477.6 178.2 L479 178.2 L478.3 179 Z" fill="#3a4a6a"/>
<circle cx="498" cy="162" r="6" fill="#eef1f6" stroke="#d6dce6" stroke-width=".6"/><path d="M495 166 L501 159" stroke="#c8ced8" stroke-width="1"/>
<path d="M497.6 178.2 L499 178.2 L498.3 179 Z" fill="#b0bccc"/>
<rect x="518.4" y="156.8" width="5" height="4.8" fill="#eef1f6" stroke="#b6c1d2" stroke-width=".5"/>
<rect x="518.4" y="165.6" width="5" height="4.8" fill="#eef1f6" stroke="#b6c1d2" stroke-width=".5"/>
<rect x="518.4" y="174.6" width="5" height="4.8" fill="#eef1f6" stroke="#b6c1d2" stroke-width=".5"/>
<circle cx="582.2" cy="160.6" r="1.5" fill="none" stroke="#445c8a" stroke-width=".8"/><circle cx="585.6" cy="160.6" r="1.5" fill="none" stroke="#445c8a" stroke-width=".8"/><path d="M582 158.6 L582 157 M585.8 158.6 L585.8 157" stroke="#445c8a" stroke-width=".9"/>
<path d="M581 166 L584.6 166 L584.6 168.6 L581 168.6 Z" fill="none" stroke="#5a6a80" stroke-width=".6"/><path d="M582.6 169.6 L587 169.6" stroke="#4a8a3a" stroke-width="1"/>
<path d="M582.2 175 L585.2 178.4 L583.4 178.2 Z" fill="#3a4a66"/><path d="M580.6 177.6 L582 178.6" stroke="#6a8a5a" stroke-width=".6"/>
</svg>
<div class="a" style="left:40.00px;top:156.87px;font-size:43.2px;line-height:43.2px;white-space:pre;color:#15428b;font-weight:normal;font-family:'Liberation Sans',sans-serif;transform-origin:0 0;transform:scale(0.10410,0.12500);">Вырезать</div>
<div class="a" style="left:40.00px;top:165.97px;font-size:43.2px;line-height:43.2px;white-space:pre;color:#15428b;font-weight:normal;font-family:'Liberation Sans',sans-serif;transform-origin:0 0;transform:scale(0.11308,0.12500);">Копировать</div>
<div class="a" style="left:40.00px;top:174.87px;font-size:43.2px;line-height:43.2px;white-space:pre;color:#15428b;font-weight:normal;font-family:'Liberation Sans',sans-serif;transform-origin:0 0;transform:scale(0.11101,0.12500);">Формат по образцу</div>
<div class="a" style="left:118.00px;top:156.87px;font-size:43.2px;line-height:43.2px;white-space:pre;color:#15428b;font-weight:normal;font-family:'Liberation Sans',sans-serif;transform-origin:0 0;transform:scale(0.10801,0.12500);">Макет ▾</div>
<div class="a" style="left:118.00px;top:165.97px;font-size:43.2px;line-height:43.2px;white-space:pre;color:#15428b;font-weight:normal;font-family:'Liberation Sans',sans-serif;transform-origin:0 0;transform:scale(0.10773,0.12500);">Восстановить</div>
<div class="a" style="left:118.00px;top:174.87px;font-size:43.2px;line-height:43.2px;white-space:pre;color:#15428b;font-weight:normal;font-family:'Liberation Sans',sans-serif;transform-origin:0 0;transform:scale(0.10247,0.12500);">Удалить</div>
<div class="a" style="left:589.00px;top:156.87px;font-size:43.2px;line-height:43.2px;white-space:pre;color:#15428b;font-weight:normal;font-family:'Liberation Sans',sans-serif;transform-origin:0 0;transform:scale(0.11357,0.12500);">Найти</div>
<div class="a" style="left:589.00px;top:165.97px;font-size:43.2px;line-height:43.2px;white-space:pre;color:#15428b;font-weight:normal;font-family:'Liberation Sans',sans-serif;transform-origin:0 0;transform:scale(0.10481,0.12500);">Заменить ▾</div>
<div class="a" style="left:589.00px;top:174.87px;font-size:43.2px;line-height:43.2px;white-space:pre;color:#15428b;font-weight:normal;font-family:'Liberation Sans',sans-serif;transform-origin:0 0;transform:scale(0.10259,0.12500);">Выделить ▾</div>
<div class="a" style="left:10.00px;top:170.87px;font-size:43.2px;line-height:43.2px;white-space:pre;color:#15428b;font-weight:normal;font-family:'Liberation Sans',sans-serif;transform-origin:0 0;transform:scale(0.10376,0.12500);">Вставить</div>
<div class="a" style="left:17.80px;top:176.65px;font-size:32px;line-height:32px;white-space:pre;color:#15428b;font-weight:normal;font-family:'Liberation Sans',sans-serif;transform-origin:0 0;transform:scale(0.11667,0.12500);">▾</div>
<div class="a" style="left:90.20px;top:170.87px;font-size:43.2px;line-height:43.2px;white-space:pre;color:#15428b;font-weight:normal;font-family:'Liberation Sans',sans-serif;transform-origin:0 0;transform:scale(0.10478,0.12500);">Создать</div>
<div class="a" style="left:91.60px;top:175.97px;font-size:43.2px;line-height:43.2px;white-space:pre;color:#15428b;font-weight:normal;font-family:'Liberation Sans',sans-serif;transform-origin:0 0;transform:scale(0.09115,0.12500);">слайд ▾</div>
<div class="a" style="left:199.60px;top:159.97px;font-size:43.2px;line-height:43.2px;white-space:pre;color:#b9c4d4;font-weight:normal;font-family:'Liberation Sans',sans-serif;transform-origin:0 0;transform:scale(0.10407,0.12500);">28</div>
<div class="a" style="left:321.90px;top:156.87px;font-size:43.2px;line-height:43.2px;white-space:pre;color:#8fa5c4;font-weight:normal;font-family:'Liberation Sans',sans-serif;transform-origin:0 0;transform:scale(0.09848,0.12500);">Направление текста ▾</div>
<div class="a" style="left:322.00px;top:165.87px;font-size:43.2px;line-height:43.2px;white-space:pre;color:#8fa5c4;font-weight:normal;font-family:'Liberation Sans',sans-serif;transform-origin:0 0;transform:scale(0.09451,0.12500);">Выровнять текст ▾</div>
<div class="a" style="left:322.00px;top:174.87px;font-size:43.2px;line-height:43.2px;white-space:pre;color:#8fa5c4;font-weight:normal;font-family:'Liberation Sans',sans-serif;transform-origin:0 0;transform:scale(0.10029,0.12500);">Преобразовать в SmartArt ▾</div>
<div class="a" style="left:526.00px;top:156.87px;font-size:43.2px;line-height:43.2px;white-space:pre;color:#8fa5c4;font-weight:normal;font-family:'Liberation Sans',sans-serif;transform-origin:0 0;transform:scale(0.12290,0.12500);">Заливка фигуры ▾</div>
<div class="a" style="left:526.00px;top:165.87px;font-size:43.2px;line-height:43.2px;white-space:pre;color:#8fa5c4;font-weight:normal;font-family:'Liberation Sans',sans-serif;transform-origin:0 0;transform:scale(0.12122,0.12500);">Контур фигуры ▾</div>
<div class="a" style="left:526.00px;top:174.87px;font-size:43.2px;line-height:43.2px;white-space:pre;color:#8fa5c4;font-weight:normal;font-family:'Liberation Sans',sans-serif;transform-origin:0 0;transform:scale(0.10889,0.12500);">Эффекты для фигур ▾</div>
<div class="a" style="left:481.00px;top:171.17px;font-size:43.2px;line-height:43.2px;white-space:pre;color:#8fa5c4;font-weight:normal;font-family:'Liberation Sans',sans-serif;transform-origin:0 0;transform:scale(0.10889,0.12500);">Экспресс-стили</div>
<div class="a" style="left:449.40px;top:171.17px;font-size:43.2px;line-height:43.2px;white-space:pre;color:#15428b;font-weight:bold;font-family:'Liberation Sans',sans-serif;transform-origin:0 0;transform:scale(0.10398,0.12500);">Упорядочить</div>
<div class="a" style="left:158.20px;top:171.87px;font-size:41.6px;line-height:41.6px;white-space:pre;color:#5d6f8e;font-weight:bold;font-family:'Liberation Sans',sans-serif;transform-origin:0 0;transform:scale(0.09044,0.12500);">Ж</div>
<div class="a" style="left:166.00px;top:171.87px;font-size:41.6px;line-height:41.6px;white-space:pre;color:#5d6f8e;font-weight:normal;font-family:'Liberation Sans',sans-serif;transform-origin:0 0;transform:scale(0.10730,0.12500);">К</div>
<div class="a" style="left:173.60px;top:171.87px;font-size:41.6px;line-height:41.6px;white-space:pre;color:#5d6f8e;font-weight:normal;font-family:'Liberation Sans',sans-serif;transform-origin:0 0;transform:scale(0.09376,0.12500);">Ч</div>
<div class="a" style="left:181.60px;top:171.87px;font-size:41.6px;line-height:41.6px;white-space:pre;color:#5d6f8e;font-weight:normal;font-family:'Liberation Sans',sans-serif;transform-origin:0 0;transform:scale(0.08946,0.12500);">abc</div>
<div class="a" style="left:193.60px;top:171.87px;font-size:41.6px;line-height:41.6px;white-space:pre;color:#5d6f8e;font-weight:normal;font-family:'Liberation Sans',sans-serif;transform-origin:0 0;transform:scale(0.07208,0.12500);">S</div>
<div class="a" style="left:206.40px;top:171.87px;font-size:41.6px;line-height:41.6px;white-space:pre;color:#5d6f8e;font-weight:normal;font-family:'Liberation Sans',sans-serif;transform-origin:0 0;transform:scale(0.09540,0.12500);">AV</div>
<div class="a" style="left:217.60px;top:171.87px;font-size:41.6px;line-height:41.6px;white-space:pre;color:#5d6f8e;font-weight:normal;font-family:'Liberation Sans',sans-serif;transform-origin:0 0;transform:scale(0.10613,0.12500);">Aa</div>
<div class="a" style="left:233.80px;top:171.87px;font-size:41.6px;line-height:41.6px;white-space:pre;color:#5d6f8e;font-weight:normal;font-family:'Liberation Sans',sans-serif;transform-origin:0 0;transform:scale(0.14415,0.12500);">A</div>
<div class="a" style="left:218.00px;top:159.68px;font-size:48px;line-height:48px;white-space:pre;color:#7f90ab;font-weight:normal;font-family:'Liberation Sans',sans-serif;transform-origin:0 0;transform:scale(0.13742,0.12500);">A</div>
<div class="a" style="left:226.60px;top:160.66px;font-size:38.4px;line-height:38.4px;white-space:pre;color:#7f90ab;font-weight:normal;font-family:'Liberation Sans',sans-serif;transform-origin:0 0;transform:scale(0.13274,0.12500);">A</div>
<div class="a" style="left:0;top:0;width:1024px;height:710px;clip-path:inset(132px 218px 143px 6px);will-change:transform">
<div class="a" style="left:6px;top:191px;width:121px;height:366px;background:linear-gradient(#b3c8ee 0%,#98b4e2 30%,#7399d3 60%,#5f88c9 85%,#5a84c7 100%)"></div>
<div class="a" style="left:6px;top:191px;width:121px;height:9px;background:linear-gradient(#d3e2f6,#bcd2ef)"></div>
<div class="a" style="left:6px;top:199.6px;width:121px;height:.8px;background:#9db7de"></div>
<svg style="left:0;top:0" width="1024" height="710">
<path d="M36.6 200 L68.6 200 L63.6 192.2 L39 192.2 Q37.4 192.2 36.4 193.6 Z" fill="#cddff5" stroke="#9db5da" stroke-width=".5"/>
<path d="M6.5 200 L40.6 200 L35.4 192 L8 192 Q6.5 192 6.5 193.5 Z" fill="url(#tabg)" stroke="#9db5da" stroke-width=".5"/>
<defs><linearGradient id="tabg" x1="0" y1="0" x2="0" y2="1"><stop offset="0" stop-color="#ffffff"/><stop offset="1" stop-color="#dce9f8"/></linearGradient></defs>
<path d="M120.6 194.6 L123.4 197.4 M123.4 194.6 L120.6 197.4" stroke="#55657f" stroke-width=".6"/>
<defs><linearGradient id="sbg" x1="0" y1="0" x2="0" y2="1"><stop offset="0" stop-color="#b9cdef"/><stop offset=".5" stop-color="#86a6da"/><stop offset="1" stop-color="#7397d2"/></linearGradient></defs><rect x="120.8" y="200.4" width="5.6" height="356" fill="url(#sbg)"/><rect x="126.4" y="191" width="1" height="366" fill="#b9d0f2"/>
<rect x="120.8" y="200.6" width="5.6" height="6.4" fill="#b7cbe9"/><path d="M122.2 205 L123.6 203.2 L125 205 Z" fill="#34507a"/>
<rect x="120.9" y="207.4" width="5.4" height="21" rx=".8" fill="url(#thg)" stroke="#8aa6cf" stroke-width=".4"/>
<defs><linearGradient id="thg" x1="0" y1="0" x2="1" y2="0"><stop offset="0" stop-color="#e6eefa"/><stop offset="1" stop-color="#c9daf2"/></linearGradient></defs>
<path d="M123.6 216 L123.6 219.6" stroke="#8aa0c0" stroke-width=".6"/>
<rect x="120.8" y="549" width="5.6" height="7" fill="#b3c7e6"/><path d="M122.2 551.6 L123.6 553.6 L125 551.6 Z" fill="#34507a"/>
<defs><linearGradient id="selg" x1="0" y1="0" x2="0" y2="1"><stop offset="0" stop-color="#f7c99a"/><stop offset=".15" stop-color="#f0a05a"/><stop offset=".4" stop-color="#df7325"/><stop offset=".75" stop-color="#e88a3e"/><stop offset="1" stop-color="#f2b27a"/></linearGradient></defs>
<rect x="7.8" y="365.8" width="110.9" height="80.5" rx="1" fill="url(#selg)"/>
</svg>
<div class="a" style="left:9.40px;top:193.46px;font-size:44.8px;line-height:44.8px;white-space:pre;color:#1e3f78;font-weight:bold;font-family:'Liberation Sans',sans-serif;transform-origin:0 0;transform:scale(0.10335,0.12500);">Слайды</div>
<div class="a" style="left:39.60px;top:193.46px;font-size:44.8px;line-height:44.8px;white-space:pre;color:#24457e;font-weight:normal;font-family:'Liberation Sans',sans-serif;transform-origin:0 0;transform:scale(0.10916,0.12500);">Структура</div>
<svg style="left:0;top:0" width="1024" height="710">
<div class="a" style="left:17px;top:205.2px;width:100.6px;height:75.40000000000003px;background:rgba(40,60,100,.35)"></div>
<div class="a" style="left:16px;top:204.2px;width:100.6px;height:75.40000000000003px;background:#fff;overflow:hidden"></div>
<div class="a" style="left:9.20px;top:205.57px;font-size:40px;line-height:40px;white-space:pre;color:#e8eef8;font-weight:normal;font-family:'Liberation Sans',sans-serif;transform-origin:0 0;transform:scale(0.10790,0.12500);">1</div>
<div class="a" style="left:16.8px;top:287.2px;width:100.8px;height:75.40000000000003px;background:rgba(40,60,100,.35)"></div>
<div class="a" style="left:15.8px;top:286.2px;width:100.8px;height:75.40000000000003px;background:#fff;overflow:hidden"></div>
<div class="a" style="left:9.20px;top:287.57px;font-size:40px;line-height:40px;white-space:pre;color:#e8eef8;font-weight:normal;font-family:'Liberation Sans',sans-serif;transform-origin:0 0;transform:scale(0.10790,0.12500);">2</div>
<div class="a" style="left:16.8px;top:368.8px;width:100.4px;height:76.59999999999997px;background:rgba(40,60,100,.35)"></div>
<div class="a" style="left:15.8px;top:367.8px;width:100.4px;height:76.59999999999997px;background:#fff;overflow:hidden"></div>
<div class="a" style="left:9.20px;top:369.17px;font-size:40px;line-height:40px;white-space:pre;color:#ffffff;font-weight:normal;font-family:'Liberation Sans',sans-serif;transform-origin:0 0;transform:scale(0.10790,0.12500);">3</div>
<div class="a" style="left:17px;top:451.7px;width:100.2px;height:75.40000000000003px;background:rgba(40,60,100,.35)"></div>
<div class="a" style="left:16px;top:450.7px;width:100.2px;height:75.40000000000003px;background:#fff;overflow:hidden"></div>
<div class="a" style="left:9.20px;top:452.07px;font-size:40px;line-height:40px;white-space:pre;color:#e8eef8;font-weight:normal;font-family:'Liberation Sans',sans-serif;transform-origin:0 0;transform:scale(0.10790,0.12500);">4</div>
<div class="a" style="left:16.8px;top:533.6px;width:100.4px;height:23.399999999999977px;background:rgba(40,60,100,.35)"></div>
<div class="a" style="left:15.8px;top:532.6px;width:100.4px;height:23.399999999999977px;background:#fff;overflow:hidden"></div>
<div class="a" style="left:9.20px;top:533.97px;font-size:40px;line-height:40px;white-space:pre;color:#e8eef8;font-weight:normal;font-family:'Liberation Sans',sans-serif;transform-origin:0 0;transform:scale(0.10790,0.12500);">5</div>
<div class="a" style="left:16px;top:204.2px;width:19px;height:75.4px;background:linear-gradient(90deg,#fff 0,#fde6df 12%,#fbd3c7 22%,#fde3db 30%,#fbcfc2 40%,#fde7e0 52%,#fcd7cb 62%,#fff3ef 75%,#fde9e3 85%,#fff 100%)"></div>
<svg style="left:0;top:0" width="1024" height="710">
<circle cx="29.8" cy="248.9" r="7" fill="#fb8433"/><circle cx="33.7" cy="261" r="3.5" fill="#fb8433"/><circle cx="39" cy="255.7" r="2.1" fill="#fb8433"/><circle cx="35.7" cy="269.2" r="1.5" fill="#fb8433"/><circle cx="28.9" cy="265.3" r=".8" fill="#fb9a5a"/>
<defs><linearGradient id="ill" x1="0" y1="1" x2="1" y2="0"><stop offset="0" stop-color="#f6f0fa"/><stop offset=".4" stop-color="#d9c4ec"/><stop offset=".7" stop-color="#b48ad8"/><stop offset="1" stop-color="#7a3cb0"/></linearGradient></defs>
<rect x="55.5" y="242.5" width="57.5" height="32.9" fill="url(#ill)"/>
<path d="M86 243.6 L112.6 243.6" stroke="#f4eefa" stroke-width=".6"/><path d="M59.4 252 L59.4 275" stroke="#8a58b8" stroke-width=".7"/><path d="M56 272.4 L86 272.4" stroke="#c4a8e0" stroke-width=".6"/>
<path d="M73 250 C71 246 75 243.6 78 245 C80 243 84 244 84 247 C86 248 85 252 82 252 L75 252 C73 252 72 251 73 250 Z" fill="#5870d8"/>
<rect x="74.6" y="256.4" width="17.6" height="10.6" rx="1" fill="#86aef0"/><path d="M76 263 Q79 259 82 262 T88 261" fill="none" stroke="#5a80d0" stroke-width=".5"/>
<path d="M85.6 256 L89.6 248.4" stroke="#f080d0" stroke-width="1.1"/><circle cx="89.8" cy="248.2" r=".9" fill="#fff"/>
<circle cx="71.8" cy="258.6" r="3.3" fill="#c040c8"/>
<rect x="66.2" y="255.6" width="4" height="7.4" rx="1" fill="#3050b0"/><path d="M66.8 263 L66.4 271.8 L68 271.8 L68.4 265 L69 271.8 L70.4 271.8 L70 263 Z" fill="#1e2030"/><circle cx="68.2" cy="253.6" r="1.6" fill="#2a2030"/>
<circle cx="79" cy="254" r="1.4" fill="#2a2030"/><rect x="77.6" y="255.4" width="3" height="4" fill="#3a58c0"/>
<circle cx="86.4" cy="254.2" r="1.4" fill="#2a2030"/><path d="M85 256 L88 256 L88.4 267 L84.6 267 Z" fill="#2e3a80"/><path d="M85 267 L85 272 M87.6 267 L87.6 272" stroke="#2a3060" stroke-width=".9"/>
<rect x="90.6" y="258.4" width="6.4" height="6" rx=".6" fill="#4056c0"/>
<circle cx="99" cy="252.8" r="1.6" fill="#2a2030"/><path d="M97 255 L101 255 L101.6 263.4 L96.6 263.4 Z" fill="#d83cc0"/><path d="M97.4 263.4 L97.2 272.2 L98.6 272.2 L99 265 L99.6 272.2 L101 272.2 L100.8 263.4 Z" fill="#242440"/>
</svg>
<div class="a" style="left:38.10px;top:214.36px;font-size:33.6px;line-height:33.6px;white-space:pre;color:#606068;font-weight:normal;font-family:'Liberation Serif',serif;transform-origin:0 0;transform:scale(0.10875,0.12500);-webkit-text-stroke:0.64px #606068;">ПРАКТИЧНІ АСПЕКТИ ОРГАНІЗАЦІЇ</div>
<div class="a" style="left:38.10px;top:219.76px;font-size:33.6px;line-height:33.6px;white-space:pre;color:#606068;font-weight:normal;font-family:'Liberation Serif',serif;transform-origin:0 0;transform:scale(0.10527,0.12500);-webkit-text-stroke:0.64px #606068;">КОМАНДНОЇ РОБОТИ.   ЕФЕКТИВНА</div>
<div class="a" style="left:38.10px;top:225.06px;font-size:33.6px;line-height:33.6px;white-space:pre;color:#606068;font-weight:normal;font-family:'Liberation Serif',serif;transform-origin:0 0;transform:scale(0.10661,0.12500);-webkit-text-stroke:0.64px #606068;">РОБОТА В КОМАНДІ</div>
<div class="a" style="left:40.00px;top:234.13px;font-size:17.6px;line-height:17.6px;white-space:pre;color:#444;font-weight:normal;font-family:'Liberation Serif',serif;transform-origin:0 0;transform:scale(0.13536,0.12500);-webkit-text-stroke:1.2px #444;">доцент кафедри  Славкова О.В.</div>
<div class="a" style="left:16.2px;top:286.2px;width:.8px;height:75.4px;background:#fcc6b8"></div>
<div class="a" style="left:112.4px;top:286.2px;width:3.6px;height:75.4px;background:linear-gradient(90deg,#fdd9c8,#fbb58e 60%,#fde2d4)"></div>
<div class="a" style="left:22.00px;top:297.45px;font-size:28.8px;line-height:28.8px;white-space:pre;color:#9a9aa0;font-weight:normal;font-family:'Liberation Serif',serif;transform-origin:0 0;transform:scale(0.15781,0.12500);">План</div>
<div class="a" style="left:25.00px;top:305.63px;font-size:19.2px;line-height:19.2px;white-space:pre;color:#6a6a70;font-weight:normal;font-family:'Liberation Serif',serif;transform-origin:0 0;transform:scale(0.17495,0.12500);-webkit-text-stroke:0.96px #6a6a70;">Загальні складові побудови команди</div>
<div class="a" style="left:25.00px;top:310.13px;font-size:19.2px;line-height:19.2px;white-space:pre;color:#6a6a70;font-weight:normal;font-family:'Liberation Serif',serif;transform-origin:0 0;transform:scale(0.17186,0.12500);-webkit-text-stroke:0.96px #6a6a70;">Принципи діяльності командних ролей</div>
<div class="a" style="left:25.00px;top:315.23px;font-size:19.2px;line-height:19.2px;white-space:pre;color:#6a6a70;font-weight:normal;font-family:'Liberation Serif',serif;transform-origin:0 0;transform:scale(0.15849,0.12500);-webkit-text-stroke:0.96px #6a6a70;">Критерії оцінювання її ефективності та ефективності командного</div>
<div class="a" style="left:25.00px;top:319.33px;font-size:19.2px;line-height:19.2px;white-space:pre;color:#6a6a70;font-weight:normal;font-family:'Liberation Serif',serif;transform-origin:0 0;transform:scale(0.30235,0.12500);-webkit-text-stroke:0.96px #6a6a70;">персоналу</div>
<div class="a" style="left:25.00px;top:323.83px;font-size:19.2px;line-height:19.2px;white-space:pre;color:#6a6a70;font-weight:normal;font-family:'Liberation Serif',serif;transform-origin:0 0;transform:scale(0.17622,0.12500);-webkit-text-stroke:0.96px #6a6a70;">Зміст поняття в "soft skills" та методи процесу формування</div>
<div class="a" style="left:25.00px;top:328.03px;font-size:19.2px;line-height:19.2px;white-space:pre;color:#6a6a70;font-weight:normal;font-family:'Liberation Serif',serif;transform-origin:0 0;transform:scale(0.17636,0.12500);-webkit-text-stroke:0.96px #6a6a70;">командної роботи</div>
<div class="a" style="left:105.5px;top:349.3px;width:5.4px;height:5.4px;border-radius:50%;background:#fb8433"></div>
<div class="a" style="left:22px;top:306.0px;width:1.6px;height:1.6px;background:#f5a060"></div>
<div class="a" style="left:22px;top:310.5px;width:1.6px;height:1.6px;background:#f5a060"></div>
<div class="a" style="left:22px;top:315.59999999999997px;width:1.6px;height:1.6px;background:#f5a060"></div>
<div class="a" style="left:22px;top:324.2px;width:1.6px;height:1.6px;background:#f5a060"></div>
<div class="a" style="left:16.3px;top:367.8px;width:.8px;height:75.4px;background:#fcc6b8"></div>
<div class="a" style="left:112.4px;top:367.8px;width:3.6px;height:75.4px;background:linear-gradient(90deg,#fdd9c8,#fbb58e 60%,#fde2d4)"></div>
<div class="a" style="left:0;top:0;width:1024px;height:710px;transform-origin:0 0;transform:translate(-23.572px,332.867px) scale(0.193)"><div class="a" style="left:237.20px;top:222.22px;font-size:188.0px;line-height:188.0px;white-space:pre;color:#595e6c;font-weight:normal;font-family:'Liberation Serif',serif;transform-origin:0 0;transform:scale(0.12500,0.12500);">1.</div>
<div class="a" style="left:259.00px;top:222.22px;font-size:188.0px;line-height:188.0px;white-space:pre;color:#595e6c;font-weight:normal;font-family:'Liberation Serif',serif;transform-origin:0 0;transform:scale(0.16989,0.12500);">З</div>
<div class="a" style="left:275.50px;top:226.99px;font-size:142.4px;line-height:142.4px;white-space:pre;color:#595e6c;font-weight:normal;font-family:'Liberation Serif',serif;transform-origin:0 0;transform:scale(0.11379,0.12500);">АГАЛЬНІ</div>
<div class="a" style="left:354.60px;top:226.99px;font-size:142.4px;line-height:142.4px;white-space:pre;color:#595e6c;font-weight:normal;font-family:'Liberation Serif',serif;transform-origin:0 0;transform:scale(0.12476,0.12500);">СКЛАДОВІ</div>
<div class="a" style="left:456.00px;top:226.99px;font-size:142.4px;line-height:142.4px;white-space:pre;color:#595e6c;font-weight:normal;font-family:'Liberation Serif',serif;transform-origin:0 0;transform:scale(0.12483,0.12500);">ПОБУДОВИ</div>
<div class="a" style="left:560.30px;top:226.99px;font-size:142.4px;line-height:142.4px;white-space:pre;color:#595e6c;font-weight:normal;font-family:'Liberation Serif',serif;transform-origin:0 0;transform:scale(0.12566,0.12500);">КОМАНДИ</div></div>
<div class="a" style="left:108.3px;top:431.40000000000003px;width:5.4px;height:5.4px;border-radius:50%;background:#fb8433;transform:translate(-2.7px,0)"></div>
<div class="a" style="left:0;top:0;width:1024px;height:710px;filter:blur(0.25px)"><div class="a" style="left:0;top:0;width:1024px;height:710px;transform-origin:0 0;will-change:transform;transform:translate(-23.572px,332.867px) scale(0.193)"><div class="a" style="left:237.20px;top:222.22px;font-size:188.0px;line-height:188.0px;white-space:pre;color:#595e6c;font-weight:normal;font-family:'Liberation Serif',serif;transform-origin:0 0;transform:scale(0.12500,0.12500);">1.</div>
<div class="a" style="left:259.00px;top:222.22px;font-size:188.0px;line-height:188.0px;white-space:pre;color:#595e6c;font-weight:normal;font-family:'Liberation Serif',serif;transform-origin:0 0;transform:scale(0.16989,0.12500);">З</div>
<div class="a" style="left:275.50px;top:226.99px;font-size:142.4px;line-height:142.4px;white-space:pre;color:#595e6c;font-weight:normal;font-family:'Liberation Serif',serif;transform-origin:0 0;transform:scale(0.11379,0.12500);">АГАЛЬНІ</div>
<div class="a" style="left:354.60px;top:226.99px;font-size:142.4px;line-height:142.4px;white-space:pre;color:#595e6c;font-weight:normal;font-family:'Liberation Serif',serif;transform-origin:0 0;transform:scale(0.12476,0.12500);">СКЛАДОВІ</div>
<div class="a" style="left:456.00px;top:226.99px;font-size:142.4px;line-height:142.4px;white-space:pre;color:#595e6c;font-weight:normal;font-family:'Liberation Serif',serif;transform-origin:0 0;transform:scale(0.12483,0.12500);">ПОБУДОВИ</div>
<div class="a" style="left:560.30px;top:226.99px;font-size:142.4px;line-height:142.4px;white-space:pre;color:#595e6c;font-weight:normal;font-family:'Liberation Serif',serif;transform-origin:0 0;transform:scale(0.12566,0.12500);">КОМАНДИ</div>
<div class="a" style="left:287.70px;top:277.65px;font-size:120.8px;line-height:120.8px;white-space:pre;color:#2e2e2e;font-weight:bold;font-family:'Liberation Serif',serif;transform-origin:0 0;transform:scale(0.12924,0.12500);">Вперше</div>
<div class="a" style="left:348.55px;top:277.65px;font-size:120.8px;line-height:120.8px;white-space:pre;color:#2e2e2e;font-weight:bold;font-family:'Liberation Serif',serif;transform-origin:0 0;transform:scale(0.12682,0.12500);">термін</div>
<div class="a" style="left:400.39px;top:277.65px;font-size:120.8px;line-height:120.8px;white-space:pre;color:#2e2e2e;font-weight:bold;font-family:'Liberation Serif',serif;transform-origin:0 0;transform:scale(0.12658,0.12500);">«команда»</div>
<div class="a" style="left:479.51px;top:277.65px;font-size:120.8px;line-height:120.8px;white-space:pre;color:#2e2e2e;font-weight:bold;font-family:'Liberation Serif',serif;transform-origin:0 0;transform:scale(0.12427,0.12500);">почав</div>
<div class="a" style="left:525.07px;top:277.65px;font-size:120.8px;line-height:120.8px;white-space:pre;color:#2e2e2e;font-weight:bold;font-family:'Liberation Serif',serif;transform-origin:0 0;transform:scale(0.12750,0.12500);">застосовуватися</div>
<div class="a" style="left:643.45px;top:277.65px;font-size:120.8px;line-height:120.8px;white-space:pre;color:#2e2e2e;font-weight:bold;font-family:'Liberation Serif',serif;transform-origin:0 0;transform:scale(0.11877,0.12500);">в</div>
<div class="a" style="left:251.30px;top:291.25px;font-size:120.8px;line-height:120.8px;white-space:pre;color:#2e2e2e;font-weight:bold;font-family:'Liberation Serif',serif;transform-origin:0 0;transform:scale(0.12486,0.12500);">лексиконі</div>
<div class="a" style="left:327.63px;top:291.25px;font-size:120.8px;line-height:120.8px;white-space:pre;color:#2e2e2e;font-weight:bold;font-family:'Liberation Serif',serif;transform-origin:0 0;transform:scale(0.12858,0.12500);">спортсменів,</div>
<div class="a" style="left:425.94px;top:291.25px;font-size:120.8px;line-height:120.8px;white-space:pre;color:#2e2e2e;font-weight:bold;font-family:'Liberation Serif',serif;transform-origin:0 0;transform:scale(0.13179,0.12500);">будучи</div>
<div class="a" style="left:482.97px;top:291.25px;font-size:120.8px;line-height:120.8px;white-space:pre;color:#2e2e2e;font-weight:bold;font-family:'Liberation Serif',serif;transform-origin:0 0;transform:scale(0.12839,0.12500);">складовою</div>
<div class="a" style="left:566.89px;top:291.25px;font-size:120.8px;line-height:120.8px;white-space:pre;color:#2e2e2e;font-weight:bold;font-family:'Liberation Serif',serif;transform-origin:0 0;transform:scale(0.12750,0.12500);">частиною</div>
<div class="a" style="left:643.45px;top:291.25px;font-size:120.8px;line-height:120.8px;white-space:pre;color:#2e2e2e;font-weight:bold;font-family:'Liberation Serif',serif;transform-origin:0 0;transform:scale(0.11877,0.12500);">в</div>
<div class="a" style="left:251.30px;top:304.85px;font-size:120.8px;line-height:120.8px;white-space:pre;color:#2e2e2e;font-weight:bold;font-family:'Liberation Serif',serif;transform-origin:0 0;transform:scale(0.13322,0.12500);">побудові</div>
<div class="a" style="left:322.17px;top:304.85px;font-size:120.8px;line-height:120.8px;white-space:pre;color:#2e2e2e;font-weight:bold;font-family:'Liberation Serif',serif;transform-origin:0 0;transform:scale(0.13583,0.12500);">їх</div>
<div class="a" style="left:345.06px;top:304.85px;font-size:120.8px;line-height:120.8px;white-space:pre;color:#2e2e2e;font-weight:bold;font-family:'Liberation Serif',serif;transform-origin:0 0;transform:scale(0.12865,0.12500);">тайм-менеджменту.</div>
<div class="a" style="left:491.74px;top:304.85px;font-size:120.8px;line-height:120.8px;white-space:pre;color:#2e2e2e;font-weight:bold;font-family:'Liberation Serif',serif;transform-origin:0 0;transform:scale(0.12395,0.12500);">На</div>
<div class="a" style="left:521.01px;top:304.85px;font-size:120.8px;line-height:120.8px;white-space:pre;color:#2e2e2e;font-weight:bold;font-family:'Liberation Serif',serif;transform-origin:0 0;transform:scale(0.12706,0.12500);">даний</div>
<div class="a" style="left:573.11px;top:304.85px;font-size:120.8px;line-height:120.8px;white-space:pre;color:#2e2e2e;font-weight:bold;font-family:'Liberation Serif',serif;transform-origin:0 0;transform:scale(0.12856,0.12500);">момент</div>
<div class="a" style="left:635.14px;top:304.85px;font-size:120.8px;line-height:120.8px;white-space:pre;color:#2e2e2e;font-weight:bold;font-family:'Liberation Serif',serif;transform-origin:0 0;transform:scale(0.13036,0.12500);">це</div>
<div class="a" style="left:251.30px;top:318.45px;font-size:120.8px;line-height:120.8px;white-space:pre;color:#2e2e2e;font-weight:bold;font-family:'Liberation Serif',serif;transform-origin:0 0;transform:scale(0.12289,0.12500);">поняття</div>
<div class="a" style="left:311.64px;top:318.45px;font-size:120.8px;line-height:120.8px;white-space:pre;color:#2e2e2e;font-weight:bold;font-family:'Liberation Serif',serif;transform-origin:0 0;transform:scale(0.12673,0.12500);">значно</div>
<div class="a" style="left:364.11px;top:318.45px;font-size:120.8px;line-height:120.8px;white-space:pre;color:#2e2e2e;font-weight:bold;font-family:'Liberation Serif',serif;transform-origin:0 0;transform:scale(0.12679,0.12500);">розширило</div>
<div class="a" style="left:447.15px;top:318.45px;font-size:120.8px;line-height:120.8px;white-space:pre;color:#2e2e2e;font-weight:bold;font-family:'Liberation Serif',serif;transform-origin:0 0;transform:scale(0.13194,0.12500);">сферу</div>
<div class="a" style="left:494.09px;top:318.45px;font-size:120.8px;line-height:120.8px;white-space:pre;color:#2e2e2e;font-weight:bold;font-family:'Liberation Serif',serif;transform-origin:0 0;transform:scale(0.12952,0.12500);">свого</div>
<div class="a" style="left:537.09px;top:318.45px;font-size:120.8px;line-height:120.8px;white-space:pre;color:#2e2e2e;font-weight:bold;font-family:'Liberation Serif',serif;transform-origin:0 0;transform:scale(0.12692,0.12500);">застосування</div>
<div class="a" style="left:634.25px;top:318.45px;font-size:120.8px;line-height:120.8px;white-space:pre;color:#2e2e2e;font-weight:bold;font-family:'Liberation Serif',serif;transform-origin:0 0;transform:scale(0.13583,0.12500);">і</div>
<div class="a" style="left:644.16px;top:318.45px;font-size:120.8px;line-height:120.8px;white-space:pre;color:#2e2e2e;font-weight:bold;font-family:'Liberation Serif',serif;transform-origin:0 0;transform:scale(0.13489,0.12500);">є</div>
<div class="a" style="left:251.30px;top:332.05px;font-size:120.8px;line-height:120.8px;white-space:pre;color:#2e2e2e;font-weight:bold;font-family:'Liberation Serif',serif;transform-origin:0 0;transform:scale(0.12255,0.12500);">актуальним</div>
<div class="a" style="left:336.43px;top:332.05px;font-size:120.8px;line-height:120.8px;white-space:pre;color:#2e2e2e;font-weight:bold;font-family:'Liberation Serif',serif;transform-origin:0 0;transform:scale(0.12398,0.12500);">для</div>
<div class="a" style="left:364.62px;top:332.05px;font-size:120.8px;line-height:120.8px;white-space:pre;color:#2e2e2e;font-weight:bold;font-family:'Liberation Serif',serif;transform-origin:0 0;transform:scale(0.12633,0.12500);">багатьох</div>
<div class="a" style="left:428.59px;top:332.05px;font-size:120.8px;line-height:120.8px;white-space:pre;color:#2e2e2e;font-weight:bold;font-family:'Liberation Serif',serif;transform-origin:0 0;transform:scale(0.13155,0.12500);">сфер.</div>
<div class="a" style="left:287.70px;top:365.05px;font-size:120.8px;line-height:120.8px;white-space:pre;color:#2e2e2e;font-weight:bold;font-family:'Liberation Serif',serif;transform-origin:0 0;transform:scale(0.12691,0.12500);">Команда</div>
<div class="a" style="left:356.93px;top:365.05px;font-size:120.8px;line-height:120.8px;white-space:pre;color:#2e2e2e;font-weight:bold;font-family:'Liberation Serif',serif;transform-origin:0 0;transform:scale(0.13583,0.12500);">-</div>
<div class="a" style="left:371.64px;top:365.05px;font-size:120.8px;line-height:120.8px;white-space:pre;color:#2e2e2e;font-weight:bold;font-family:'Liberation Serif',serif;transform-origin:0 0;transform:scale(0.13036,0.12500);">це</div>
<div class="a" style="left:396.94px;top:365.05px;font-size:120.8px;line-height:120.8px;white-space:pre;color:#2e2e2e;font-weight:bold;font-family:'Liberation Serif',serif;transform-origin:0 0;transform:scale(0.12751,0.12500);">термін,</div>
<div class="a" style="left:456.42px;top:365.05px;font-size:120.8px;line-height:120.8px;white-space:pre;color:#2e2e2e;font-weight:bold;font-family:'Liberation Serif',serif;transform-origin:0 0;transform:scale(0.12090,0.12500);">яким</div>
<div class="a" style="left:500.35px;top:365.05px;font-size:120.8px;line-height:120.8px;white-space:pre;color:#2e2e2e;font-weight:bold;font-family:'Liberation Serif',serif;transform-origin:0 0;transform:scale(0.12551,0.12500);">позначають</div>
<div class="a" style="left:590.70px;top:365.05px;font-size:120.8px;line-height:120.8px;white-space:pre;color:#2e2e2e;font-weight:bold;font-family:'Liberation Serif',serif;transform-origin:0 0;transform:scale(0.12535,0.12500);">невеликі</div>
<div class="a" style="left:251.30px;top:378.80px;font-size:120.8px;line-height:120.8px;white-space:pre;color:#2e2e2e;font-weight:bold;font-family:'Liberation Serif',serif;transform-origin:0 0;transform:scale(0.12649,0.12500);">групи</div>
<div class="a" style="left:299.24px;top:378.80px;font-size:120.8px;line-height:120.8px;white-space:pre;color:#2e2e2e;font-weight:bold;font-family:'Liberation Serif',serif;transform-origin:0 0;transform:scale(0.13050,0.12500);">(від</div>
<div class="a" style="left:332.82px;top:378.80px;font-size:120.8px;line-height:120.8px;white-space:pre;color:#2e2e2e;font-weight:bold;font-family:'Liberation Serif',serif;transform-origin:0 0;transform:scale(0.13583,0.12500);">3</div>
<div class="a" style="left:348.49px;top:378.80px;font-size:120.8px;line-height:120.8px;white-space:pre;color:#2e2e2e;font-weight:bold;font-family:'Liberation Serif',serif;transform-origin:0 0;transform:scale(0.13621,0.12500);">до</div>
<div class="a" style="left:372.50px;top:378.80px;font-size:120.8px;line-height:120.8px;white-space:pre;color:#2e2e2e;font-weight:bold;font-family:'Liberation Serif',serif;transform-origin:0 0;transform:scale(0.13583,0.12500);">12</div>
<div class="a" style="left:396.37px;top:378.80px;font-size:120.8px;line-height:120.8px;white-space:pre;color:#2e2e2e;font-weight:bold;font-family:'Liberation Serif',serif;transform-origin:0 0;transform:scale(0.13781,0.12500);">осіб),</div>
<div class="a" style="left:442.20px;top:378.80px;font-size:120.8px;line-height:120.8px;white-space:pre;color:#2e2e2e;font-weight:bold;font-family:'Liberation Serif',serif;transform-origin:0 0;transform:scale(0.12833,0.12500);">що</div>
<div class="a" style="left:470.49px;top:378.80px;font-size:120.8px;line-height:120.8px;white-space:pre;color:#2e2e2e;font-weight:bold;font-family:'Liberation Serif',serif;transform-origin:0 0;transform:scale(0.12437,0.12500);">мають</div>
<div class="a" style="left:522.20px;top:378.80px;font-size:120.8px;line-height:120.8px;white-space:pre;color:#2e2e2e;font-weight:bold;font-family:'Liberation Serif',serif;transform-origin:0 0;transform:scale(0.12275,0.12500);">яскраво</div>
<div class="a" style="left:583.79px;top:378.80px;font-size:120.8px;line-height:120.8px;white-space:pre;color:#2e2e2e;font-weight:bold;font-family:'Liberation Serif',serif;transform-origin:0 0;transform:scale(0.12669,0.12500);">виражену</div>
<div class="a" style="left:251.30px;top:392.55px;font-size:120.8px;line-height:120.8px;white-space:pre;color:#2e2e2e;font-weight:bold;font-family:'Liberation Serif',serif;transform-origin:0 0;transform:scale(0.12715,0.12500);">цільову</div>
<div class="a" style="left:317.26px;top:392.55px;font-size:120.8px;line-height:120.8px;white-space:pre;color:#2e2e2e;font-weight:bold;font-family:'Liberation Serif',serif;transform-origin:0 0;transform:scale(0.12570,0.12500);">спрямованість</div>
<div class="a" style="left:431.10px;top:392.55px;font-size:120.8px;line-height:120.8px;white-space:pre;color:#2e2e2e;font-weight:bold;font-family:'Liberation Serif',serif;transform-origin:0 0;transform:scale(0.13583,0.12500);">і</div>
<div class="a" style="left:449.01px;top:392.55px;font-size:120.8px;line-height:120.8px;white-space:pre;color:#2e2e2e;font-weight:bold;font-family:'Liberation Serif',serif;transform-origin:0 0;transform:scale(0.12805,0.12500);">інтенсивну</div>
<div class="a" style="left:539.74px;top:392.55px;font-size:120.8px;line-height:120.8px;white-space:pre;color:#2e2e2e;font-weight:bold;font-family:'Liberation Serif',serif;transform-origin:0 0;transform:scale(0.13037,0.12500);">взаємодію</div>
<div class="a" style="left:624.92px;top:392.55px;font-size:120.8px;line-height:120.8px;white-space:pre;color:#2e2e2e;font-weight:bold;font-family:'Liberation Serif',serif;transform-origin:0 0;transform:scale(0.12917,0.12500);">між</div>
<div class="a" style="left:251.30px;top:406.30px;font-size:120.8px;line-height:120.8px;white-space:pre;color:#2e2e2e;font-weight:bold;font-family:'Liberation Serif',serif;transform-origin:0 0;transform:scale(0.12505,0.12500);">членами</div>
<div class="a" style="left:314.40px;top:406.30px;font-size:120.8px;line-height:120.8px;white-space:pre;color:#2e2e2e;font-weight:bold;font-family:'Liberation Serif',serif;transform-origin:0 0;transform:scale(0.12729,0.12500);">групи.</div>
<div class="a" style="left:363.13px;top:406.30px;font-size:120.8px;line-height:120.8px;white-space:pre;color:#2e2e2e;font-weight:bold;font-family:'Liberation Serif',serif;transform-origin:0 0;transform:scale(0.12894,0.12500);">Виходячи</div>
<div class="a" style="left:435.24px;top:406.30px;font-size:120.8px;line-height:120.8px;white-space:pre;color:#2e2e2e;font-weight:bold;font-family:'Liberation Serif',serif;transform-origin:0 0;transform:scale(0.13350,0.12500);">з</div>
<div class="a" style="left:445.87px;top:406.30px;font-size:120.8px;line-height:120.8px;white-space:pre;color:#2e2e2e;font-weight:bold;font-family:'Liberation Serif',serif;transform-origin:0 0;transform:scale(0.12814,0.12500);">цього,</div>
<div class="a" style="left:493.11px;top:406.30px;font-size:120.8px;line-height:120.8px;white-space:pre;color:#2e2e2e;font-weight:bold;font-family:'Liberation Serif',serif;transform-origin:0 0;transform:scale(0.12441,0.12500);">командна</div>
<div class="a" style="left:563.04px;top:406.30px;font-size:120.8px;line-height:120.8px;white-space:pre;color:#2e2e2e;font-weight:bold;font-family:'Liberation Serif',serif;transform-origin:0 0;transform:scale(0.12936,0.12500);">робота</div>
<div class="a" style="left:614.58px;top:406.30px;font-size:120.8px;line-height:120.8px;white-space:pre;color:#2e2e2e;font-weight:bold;font-family:'Liberation Serif',serif;transform-origin:0 0;transform:scale(0.13583,0.12500);">—</div>
<div class="a" style="left:635.14px;top:406.30px;font-size:120.8px;line-height:120.8px;white-space:pre;color:#2e2e2e;font-weight:bold;font-family:'Liberation Serif',serif;transform-origin:0 0;transform:scale(0.13036,0.12500);">це</div>
<div class="a" style="left:251.30px;top:420.05px;font-size:120.8px;line-height:120.8px;white-space:pre;color:#2e2e2e;font-weight:bold;font-family:'Liberation Serif',serif;transform-origin:0 0;transform:scale(0.12441,0.12500);">ефективна</div>
<div class="a" style="left:346.70px;top:420.05px;font-size:120.8px;line-height:120.8px;white-space:pre;color:#2e2e2e;font-weight:bold;font-family:'Liberation Serif',serif;transform-origin:0 0;transform:scale(0.13583,0.12500);">і</div>
<div class="a" style="left:373.75px;top:420.05px;font-size:120.8px;line-height:120.8px;white-space:pre;color:#2e2e2e;font-weight:bold;font-family:'Liberation Serif',serif;transform-origin:0 0;transform:scale(0.12522,0.12500);">продуктивна</div>
<div class="a" style="left:485.02px;top:420.05px;font-size:120.8px;line-height:120.8px;white-space:pre;color:#2e2e2e;font-weight:bold;font-family:'Liberation Serif',serif;transform-origin:0 0;transform:scale(0.12173,0.12500);">практична</div>
<div class="a" style="left:579.80px;top:420.05px;font-size:120.8px;line-height:120.8px;white-space:pre;color:#2e2e2e;font-weight:bold;font-family:'Liberation Serif',serif;transform-origin:0 0;transform:scale(0.12489,0.12500);">діяльність</div>
<div class="a" style="left:251.30px;top:433.80px;font-size:120.8px;line-height:120.8px;white-space:pre;color:#2e2e2e;font-weight:bold;font-family:'Liberation Serif',serif;transform-origin:0 0;transform:scale(0.12556,0.12500);">команди.</div>
<div class="a" style="left:323.17px;top:433.80px;font-size:120.8px;line-height:120.8px;white-space:pre;color:#2e2e2e;font-weight:bold;font-family:'Liberation Serif',serif;transform-origin:0 0;transform:scale(0.13762,0.12500);">Або</div>
<div class="a" style="left:360.02px;top:433.80px;font-size:120.8px;line-height:120.8px;white-space:pre;color:#2e2e2e;font-weight:bold;font-family:'Liberation Serif',serif;transform-origin:0 0;transform:scale(0.12942,0.12500);">ж</div>
<div class="a" style="left:380.63px;top:433.80px;font-size:120.8px;line-height:120.8px;white-space:pre;color:#2e2e2e;font-weight:bold;font-family:'Liberation Serif',serif;transform-origin:0 0;transform:scale(0.13036,0.12500);">це</div>
<div class="a" style="left:405.97px;top:433.80px;font-size:120.8px;line-height:120.8px;white-space:pre;color:#2e2e2e;font-weight:bold;font-family:'Liberation Serif',serif;transform-origin:0 0;transform:scale(0.12521,0.12500);">певна</div>
<div class="a" style="left:455.13px;top:433.80px;font-size:120.8px;line-height:120.8px;white-space:pre;color:#2e2e2e;font-weight:bold;font-family:'Liberation Serif',serif;transform-origin:0 0;transform:scale(0.12512,0.12500);">спільна</div>
<div class="a" style="left:516.77px;top:433.80px;font-size:120.8px;line-height:120.8px;white-space:pre;color:#2e2e2e;font-weight:bold;font-family:'Liberation Serif',serif;transform-origin:0 0;transform:scale(0.12090,0.12500);">та</div>
<div class="a" style="left:540.70px;top:433.80px;font-size:120.8px;line-height:120.8px;white-space:pre;color:#2e2e2e;font-weight:bold;font-family:'Liberation Serif',serif;transform-origin:0 0;transform:scale(0.12621,0.12500);">цілеспрямована</div>
<div class="a" style="left:251.30px;top:447.55px;font-size:120.8px;line-height:120.8px;white-space:pre;color:#2e2e2e;font-weight:bold;font-family:'Liberation Serif',serif;transform-origin:0 0;transform:scale(0.12936,0.12500);">робота</div>
<div class="a" style="left:309.41px;top:447.55px;font-size:120.8px;line-height:120.8px;white-space:pre;color:#2e2e2e;font-weight:bold;font-family:'Liberation Serif',serif;transform-origin:0 0;transform:scale(0.12649,0.12500);">групи</div>
<div class="a" style="left:360.60px;top:447.55px;font-size:120.8px;line-height:120.8px;white-space:pre;color:#2e2e2e;font-weight:bold;font-family:'Liberation Serif',serif;transform-origin:0 0;transform:scale(0.12678,0.12500);">фахівців,</div>
<div class="a" style="left:434.92px;top:447.55px;font-size:120.8px;line-height:120.8px;white-space:pre;color:#2e2e2e;font-weight:bold;font-family:'Liberation Serif',serif;transform-origin:0 0;transform:scale(0.11913,0.12500);">які</div>
<div class="a" style="left:465.70px;top:447.55px;font-size:120.8px;line-height:120.8px;white-space:pre;color:#2e2e2e;font-weight:bold;font-family:'Liberation Serif',serif;transform-origin:0 0;transform:scale(0.12565,0.12500);">працюють</div>
<div class="a" style="left:548.41px;top:447.55px;font-size:120.8px;line-height:120.8px;white-space:pre;color:#2e2e2e;font-weight:bold;font-family:'Liberation Serif',serif;transform-origin:0 0;transform:scale(0.12634,0.12500);">за</div>
<div class="a" style="left:572.89px;top:447.55px;font-size:120.8px;line-height:120.8px;white-space:pre;color:#2e2e2e;font-weight:bold;font-family:'Liberation Serif',serif;transform-origin:0 0;transform:scale(0.12782,0.12500);">заздалегідь</div>
<div class="a" style="left:251.30px;top:461.30px;font-size:120.8px;line-height:120.8px;white-space:pre;color:#2e2e2e;font-weight:bold;font-family:'Liberation Serif',serif;transform-origin:0 0;transform:scale(0.12582,0.12500);">встановленим</div>
<div class="a" style="left:580.45px;top:461.30px;font-size:120.8px;line-height:120.8px;white-space:pre;color:#2e2e2e;font-weight:bold;font-family:'Liberation Serif',serif;transform-origin:0 0;transform:scale(0.12355,0.12500);">правилам.</div>
<div class="a" style="left:287.70px;top:489.65px;font-size:120.8px;line-height:120.8px;white-space:pre;color:#2e2e2e;font-weight:bold;font-family:'Liberation Serif',serif;transform-origin:0 0;transform:scale(0.12699,0.12500);">Найпростіший</div>
<div class="a" style="left:401.98px;top:489.65px;font-size:120.8px;line-height:120.8px;white-space:pre;color:#2e2e2e;font-weight:bold;font-family:'Liberation Serif',serif;transform-origin:0 0;transform:scale(0.12370,0.12500);">приклад</div>
<div class="a" style="left:471.09px;top:489.65px;font-size:120.8px;line-height:120.8px;white-space:pre;color:#2e2e2e;font-weight:bold;font-family:'Liberation Serif',serif;transform-origin:0 0;transform:scale(0.13350,0.12500);">з</div>
<div class="a" style="left:489.13px;top:489.65px;font-size:120.8px;line-height:120.8px;white-space:pre;color:#2e2e2e;font-weight:bold;font-family:'Liberation Serif',serif;transform-origin:0 0;transform:scale(0.12868,0.12500);">історії:</div>
<div class="a" style="left:549.56px;top:489.65px;font-size:120.8px;line-height:120.8px;white-space:pre;color:#2e2e2e;font-weight:bold;font-family:'Liberation Serif',serif;transform-origin:0 0;transform:scale(0.12415,0.12500);">команда</div>
<div class="a" style="left:618.12px;top:489.65px;font-size:120.8px;line-height:120.8px;white-space:pre;color:#2e2e2e;font-weight:bold;font-family:'Liberation Serif',serif;transform-origin:0 0;transform:scale(0.13583,0.12500);">-</div>
<div class="a" style="left:635.14px;top:489.65px;font-size:120.8px;line-height:120.8px;white-space:pre;color:#2e2e2e;font-weight:bold;font-family:'Liberation Serif',serif;transform-origin:0 0;transform:scale(0.13036,0.12500);">це</div>
<div class="a" style="left:251.30px;top:503.75px;font-size:120.8px;line-height:120.8px;white-space:pre;color:#2e2e2e;font-weight:bold;font-family:'Liberation Serif',serif;transform-origin:0 0;transform:scale(0.12440,0.12500);">військо,</div>
<div class="a" style="left:317.73px;top:503.75px;font-size:120.8px;line-height:120.8px;white-space:pre;color:#2e2e2e;font-weight:bold;font-family:'Liberation Serif',serif;transform-origin:0 0;transform:scale(0.12341,0.12500);">кожна</div>
<div class="a" style="left:371.19px;top:503.75px;font-size:120.8px;line-height:120.8px;white-space:pre;color:#2e2e2e;font-weight:bold;font-family:'Liberation Serif',serif;transform-origin:0 0;transform:scale(0.12780,0.12500);">дія</div>
<div class="a" style="left:402.78px;top:503.75px;font-size:120.8px;line-height:120.8px;white-space:pre;color:#2e2e2e;font-weight:bold;font-family:'Liberation Serif',serif;transform-origin:0 0;transform:scale(0.12226,0.12500);">якого</div>
<div class="a" style="left:451.32px;top:503.75px;font-size:120.8px;line-height:120.8px;white-space:pre;color:#2e2e2e;font-weight:bold;font-family:'Liberation Serif',serif;transform-origin:0 0;transform:scale(0.12575,0.12500);">націлена</div>
<div class="a" style="left:523.39px;top:503.75px;font-size:120.8px;line-height:120.8px;white-space:pre;color:#2e2e2e;font-weight:bold;font-family:'Liberation Serif',serif;transform-origin:0 0;transform:scale(0.12356,0.12500);">на</div>
<div class="a" style="left:550.59px;top:503.75px;font-size:120.8px;line-height:120.8px;white-space:pre;color:#2e2e2e;font-weight:bold;font-family:'Liberation Serif',serif;transform-origin:0 0;transform:scale(0.13005,0.12500);">перемогу</div>
<div class="a" style="left:626.79px;top:503.75px;font-size:120.8px;line-height:120.8px;white-space:pre;color:#2e2e2e;font-weight:bold;font-family:'Liberation Serif',serif;transform-origin:0 0;transform:scale(0.12773,0.12500);">над</div>
<div class="a" style="left:251.30px;top:517.85px;font-size:120.8px;line-height:120.8px;white-space:pre;color:#2e2e2e;font-weight:bold;font-family:'Liberation Serif',serif;transform-origin:0 0;transform:scale(0.12474,0.12500);">противником.</div>
<div class="a" style="left:357.02px;top:517.85px;font-size:120.8px;line-height:120.8px;white-space:pre;color:#2e2e2e;font-weight:bold;font-family:'Liberation Serif',serif;transform-origin:0 0;transform:scale(0.13103,0.12500);">У</div>
<div class="a" style="left:378.61px;top:517.85px;font-size:120.8px;line-height:120.8px;white-space:pre;color:#2e2e2e;font-weight:bold;font-family:'Liberation Serif',serif;transform-origin:0 0;transform:scale(0.12505,0.12500);">війську</div>
<div class="a" style="left:440.38px;top:517.85px;font-size:120.8px;line-height:120.8px;white-space:pre;color:#2e2e2e;font-weight:bold;font-family:'Liberation Serif',serif;transform-origin:0 0;transform:scale(0.12668,0.12500);">всі</div>
<div class="a" style="left:469.85px;top:517.85px;font-size:120.8px;line-height:120.8px;white-space:pre;color:#2e2e2e;font-weight:bold;font-family:'Liberation Serif',serif;transform-origin:0 0;transform:scale(0.12756,0.12500);">воїни</div>
<div class="a" style="left:517.78px;top:517.85px;font-size:120.8px;line-height:120.8px;white-space:pre;color:#2e2e2e;font-weight:bold;font-family:'Liberation Serif',serif;transform-origin:0 0;transform:scale(0.12832,0.12500);">діють</div>
<div class="a" style="left:567.35px;top:517.85px;font-size:120.8px;line-height:120.8px;white-space:pre;color:#2e2e2e;font-weight:bold;font-family:'Liberation Serif',serif;transform-origin:0 0;transform:scale(0.12970,0.12500);">злагоджено,</div>
<div class="a" style="left:251.30px;top:531.95px;font-size:120.8px;line-height:120.8px;white-space:pre;color:#2e2e2e;font-weight:bold;font-family:'Liberation Serif',serif;transform-origin:0 0;transform:scale(0.12801,0.12500);">дисципліновано</div>
<div class="a" style="left:367.69px;top:531.95px;font-size:120.8px;line-height:120.8px;white-space:pre;color:#2e2e2e;font-weight:bold;font-family:'Liberation Serif',serif;transform-origin:0 0;transform:scale(0.13583,0.12500);">і</div>
<div class="a" style="left:376.35px;top:531.95px;font-size:120.8px;line-height:120.8px;white-space:pre;color:#2e2e2e;font-weight:bold;font-family:'Liberation Serif',serif;transform-origin:0 0;transform:scale(0.11877,0.12500);">в</div>
<div class="a" style="left:388.20px;top:531.95px;font-size:120.8px;line-height:120.8px;white-space:pre;color:#2e2e2e;font-weight:bold;font-family:'Liberation Serif',serif;transform-origin:0 0;transform:scale(0.12961,0.12500);">інтересах</div>
<div class="a" style="left:458.96px;top:531.95px;font-size:120.8px;line-height:120.8px;white-space:pre;color:#2e2e2e;font-weight:bold;font-family:'Liberation Serif',serif;transform-origin:0 0;transform:scale(0.12515,0.12500);">загальної</div>
<div class="a" style="left:528.20px;top:531.95px;font-size:120.8px;line-height:120.8px;white-space:pre;color:#2e2e2e;font-weight:bold;font-family:'Liberation Serif',serif;transform-origin:0 0;transform:scale(0.12784,0.12500);">мети.</div></div></div>
<div class="a" style="left:16.3px;top:450.7px;width:.8px;height:75.4px;background:#fcc6b8"></div>
<div class="a" style="left:112.4px;top:450.7px;width:3.6px;height:75.4px;background:linear-gradient(90deg,#fdd9c8,#fbb58e 60%,#fde2d4)"></div>
<div class="a" style="left:0;top:0;width:1024px;height:710px;transform-origin:0 0;transform:translate(-23.572px,415.767px) scale(0.193)"><div class="a" style="left:237.20px;top:222.22px;font-size:188.0px;line-height:188.0px;white-space:pre;color:#595e6c;font-weight:normal;font-family:'Liberation Serif',serif;transform-origin:0 0;transform:scale(0.12500,0.12500);">1.</div>
<div class="a" style="left:259.00px;top:222.22px;font-size:188.0px;line-height:188.0px;white-space:pre;color:#595e6c;font-weight:normal;font-family:'Liberation Serif',serif;transform-origin:0 0;transform:scale(0.16989,0.12500);">З</div>
<div class="a" style="left:275.50px;top:226.99px;font-size:142.4px;line-height:142.4px;white-space:pre;color:#595e6c;font-weight:normal;font-family:'Liberation Serif',serif;transform-origin:0 0;transform:scale(0.11379,0.12500);">АГАЛЬНІ</div>
<div class="a" style="left:354.60px;top:226.99px;font-size:142.4px;line-height:142.4px;white-space:pre;color:#595e6c;font-weight:normal;font-family:'Liberation Serif',serif;transform-origin:0 0;transform:scale(0.12476,0.12500);">СКЛАДОВІ</div>
<div class="a" style="left:456.00px;top:226.99px;font-size:142.4px;line-height:142.4px;white-space:pre;color:#595e6c;font-weight:normal;font-family:'Liberation Serif',serif;transform-origin:0 0;transform:scale(0.12483,0.12500);">ПОБУДОВИ</div>
<div class="a" style="left:560.30px;top:226.99px;font-size:142.4px;line-height:142.4px;white-space:pre;color:#595e6c;font-weight:normal;font-family:'Liberation Serif',serif;transform-origin:0 0;transform:scale(0.12566,0.12500);">КОМАНДИ</div></div>
<div class="a" style="left:108.3px;top:514.3px;width:5.4px;height:5.4px;border-radius:50%;background:#fb8433;transform:translate(-2.7px,0)"></div>
<div class="a" style="left:22.00px;top:468.64px;font-size:20.8px;line-height:20.8px;white-space:pre;color:#8a8a8a;font-weight:normal;font-family:'Liberation Sans',sans-serif;transform-origin:0 0;transform:scale(0.13963,0.12500);">Командна робота</div>
<div class="a" style="left:21.6px;top:475.0px;width:1.5px;height:1.5px;background:#f5a060"></div>
<div class="a" style="left:25.00px;top:474.48px;font-size:18.4px;line-height:18.4px;white-space:pre;color:#6e6e6e;font-weight:normal;font-family:'Liberation Sans',sans-serif;transform-origin:0 0;transform:scale(0.13095,0.12500);-webkit-text-stroke:0.96px #6e6e6e;">Командна робота передбачає спільну діяльність учасників групи для</div>
<div class="a" style="left:25.00px;top:476.63px;font-size:18.4px;line-height:18.4px;white-space:pre;color:#6e6e6e;font-weight:normal;font-family:'Liberation Sans',sans-serif;transform-origin:0 0;transform:scale(0.12545,0.12500);-webkit-text-stroke:0.96px #6e6e6e;">Командна робота передбачає спільну діяльність</div>
<div class="a" style="left:21.6px;top:481.79999999999995px;width:1.5px;height:1.5px;background:#f5a060"></div>
<div class="a" style="left:25.00px;top:481.28px;font-size:18.4px;line-height:18.4px;white-space:pre;color:#6e6e6e;font-weight:normal;font-family:'Liberation Sans',sans-serif;transform-origin:0 0;transform:scale(0.13095,0.12500);-webkit-text-stroke:0.96px #6e6e6e;">Командна робота передбачає спільну діяльність учасників групи для</div>
<div class="a" style="left:25.00px;top:483.43px;font-size:18.4px;line-height:18.4px;white-space:pre;color:#6e6e6e;font-weight:normal;font-family:'Liberation Sans',sans-serif;transform-origin:0 0;transform:scale(0.13095,0.12500);-webkit-text-stroke:0.96px #6e6e6e;">Командна робота передбачає спільну діяльність учасників групи для</div>
<div class="a" style="left:25.00px;top:485.58px;font-size:18.4px;line-height:18.4px;white-space:pre;color:#6e6e6e;font-weight:normal;font-family:'Liberation Sans',sans-serif;transform-origin:0 0;transform:scale(0.14234,0.12500);-webkit-text-stroke:0.96px #6e6e6e;">Командна робота передбачає спільну діяльність</div>
<div class="a" style="left:21.6px;top:490.4px;width:1.5px;height:1.5px;background:#f5a060"></div>
<div class="a" style="left:25.00px;top:489.88px;font-size:18.4px;line-height:18.4px;white-space:pre;color:#6e6e6e;font-weight:normal;font-family:'Liberation Sans',sans-serif;transform-origin:0 0;transform:scale(0.13095,0.12500);-webkit-text-stroke:0.96px #6e6e6e;">Командна робота передбачає спільну діяльність учасників групи для</div>
<div class="a" style="left:25.00px;top:492.03px;font-size:18.4px;line-height:18.4px;white-space:pre;color:#6e6e6e;font-weight:normal;font-family:'Liberation Sans',sans-serif;transform-origin:0 0;transform:scale(0.12545,0.12500);-webkit-text-stroke:0.96px #6e6e6e;">Командна робота передбачає спільну діяльність</div>
<div class="a" style="left:21.6px;top:497.0px;width:1.5px;height:1.5px;background:#f5a060"></div>
<div class="a" style="left:25.00px;top:496.48px;font-size:18.4px;line-height:18.4px;white-space:pre;color:#6e6e6e;font-weight:normal;font-family:'Liberation Sans',sans-serif;transform-origin:0 0;transform:scale(0.13095,0.12500);-webkit-text-stroke:0.96px #6e6e6e;">Командна робота передбачає спільну діяльність учасників групи для</div>
<div class="a" style="left:25.00px;top:498.63px;font-size:18.4px;line-height:18.4px;white-space:pre;color:#6e6e6e;font-weight:normal;font-family:'Liberation Sans',sans-serif;transform-origin:0 0;transform:scale(0.13095,0.12500);-webkit-text-stroke:0.96px #6e6e6e;">Командна робота передбачає спільну діяльність учасників групи для</div>
<div class="a" style="left:25.00px;top:500.78px;font-size:18.4px;line-height:18.4px;white-space:pre;color:#6e6e6e;font-weight:normal;font-family:'Liberation Sans',sans-serif;transform-origin:0 0;transform:scale(0.14234,0.12500);-webkit-text-stroke:0.96px #6e6e6e;">Командна робота передбачає спільну діяльність</div>
<div class="a" style="left:21.6px;top:507.9px;width:1.5px;height:1.5px;background:#f5a060"></div>
<div class="a" style="left:25.00px;top:507.38px;font-size:18.4px;line-height:18.4px;white-space:pre;color:#6e6e6e;font-weight:normal;font-family:'Liberation Sans',sans-serif;transform-origin:0 0;transform:scale(0.13095,0.12500);-webkit-text-stroke:0.96px #6e6e6e;">Командна робота передбачає спільну діяльність учасників групи для</div>
<div class="a" style="left:25.00px;top:509.53px;font-size:18.4px;line-height:18.4px;white-space:pre;color:#6e6e6e;font-weight:normal;font-family:'Liberation Sans',sans-serif;transform-origin:0 0;transform:scale(0.13095,0.12500);-webkit-text-stroke:0.96px #6e6e6e;">Командна робота передбачає спільну діяльність учасників групи для</div>
<div class="a" style="left:25.00px;top:511.68px;font-size:18.4px;line-height:18.4px;white-space:pre;color:#6e6e6e;font-weight:normal;font-family:'Liberation Sans',sans-serif;transform-origin:0 0;transform:scale(0.14234,0.12500);-webkit-text-stroke:0.96px #6e6e6e;">Командна робота передбачає спільну діяльність</div>
<div class="a" style="left:16.3px;top:532.6px;width:.8px;height:23.4px;background:#fcc6b8"></div>
<div class="a" style="left:112.4px;top:532.6px;width:3.6px;height:23.4px;background:linear-gradient(90deg,#fdd9c8,#fbb58e 60%,#fde2d4)"></div>
<div class="a" style="left:0;top:0;width:1024px;height:710px;transform-origin:0 0;transform:translate(-23.572px,497.66700000000003px) scale(0.193)"><div class="a" style="left:237.20px;top:222.22px;font-size:188.0px;line-height:188.0px;white-space:pre;color:#595e6c;font-weight:normal;font-family:'Liberation Serif',serif;transform-origin:0 0;transform:scale(0.12500,0.12500);">1.</div>
<div class="a" style="left:259.00px;top:222.22px;font-size:188.0px;line-height:188.0px;white-space:pre;color:#595e6c;font-weight:normal;font-family:'Liberation Serif',serif;transform-origin:0 0;transform:scale(0.16989,0.12500);">З</div>
<div class="a" style="left:275.50px;top:226.99px;font-size:142.4px;line-height:142.4px;white-space:pre;color:#595e6c;font-weight:normal;font-family:'Liberation Serif',serif;transform-origin:0 0;transform:scale(0.11379,0.12500);">АГАЛЬНІ</div>
<div class="a" style="left:354.60px;top:226.99px;font-size:142.4px;line-height:142.4px;white-space:pre;color:#595e6c;font-weight:normal;font-family:'Liberation Serif',serif;transform-origin:0 0;transform:scale(0.12476,0.12500);">СКЛАДОВІ</div>
<div class="a" style="left:456.00px;top:226.99px;font-size:142.4px;line-height:142.4px;white-space:pre;color:#595e6c;font-weight:normal;font-family:'Liberation Serif',serif;transform-origin:0 0;transform:scale(0.12483,0.12500);">ПОБУДОВИ</div>
<div class="a" style="left:560.30px;top:226.99px;font-size:142.4px;line-height:142.4px;white-space:pre;color:#595e6c;font-weight:normal;font-family:'Liberation Serif',serif;transform-origin:0 0;transform:scale(0.12566,0.12500);">КОМАНДИ</div></div>
<div class="a" style="left:55.00px;top:551.03px;font-size:19.2px;line-height:19.2px;white-space:pre;color:#333;font-weight:normal;font-family:'Liberation Sans',sans-serif;transform-origin:0 0;transform:scale(0.13953,0.12500);-webkit-text-stroke:1.2px #333;">Командна робота передбачає спільну</div>
<div class="a" style="left:25.00px;top:553.43px;font-size:19.2px;line-height:19.2px;white-space:pre;color:#555;font-weight:normal;font-family:'Liberation Sans',sans-serif;transform-origin:0 0;transform:scale(0.12549,0.12500);-webkit-text-stroke:0.8px #555;">Командна робота передбачає спільну діяльність учасників групи для</div>
<div class="a" style="left:133.00px;top:540.47px;font-size:56px;line-height:56px;white-space:pre;color:#333;font-weight:normal;font-family:'Liberation Sans',sans-serif;transform-origin:0 0;transform:scale(0.11619,0.12500);">Заметки к слайду</div>
<div class="a" style="left:6px;top:556px;width:800px;height:11px;background:linear-gradient(#d6e5f8,#c0d5f0)"></div>
<div class="a" style="left:6px;top:556.2px;width:800px;height:.8px;background:#a9c1e3"></div>
<div class="a" style="left:9.50px;top:558.63px;font-size:43.2px;line-height:43.2px;white-space:pre;color:#2c4a80;font-weight:normal;font-family:'Liberation Sans',sans-serif;transform-origin:0 0;transform:scale(0.09829,0.12500);">Слайд 3 из 6   Тема "Поток"</div>
<div class="a" style="left:67.4px;top:557.6px;width:.6px;height:8px;background:#a8bcd8"></div>
<div class="a" style="left:113.8px;top:557.6px;width:.6px;height:8px;background:#a8bcd8"></div>
<svg style="left:0;top:0" width="1024" height="710"><circle cx="74.6" cy="560.8" r="2.4" fill="#f2f4f8" stroke="#7a8aa6" stroke-width=".4"/><path d="M73 559 L76.4 562.6 M76.4 559 L73 562.6" stroke="#e33b2e" stroke-width=".7"/></svg>
<div class="a" style="left:84.00px;top:558.63px;font-size:43.2px;line-height:43.2px;white-space:pre;color:#2c4a80;font-weight:normal;font-family:'Liberation Sans',sans-serif;transform-origin:0 0;transform:scale(0.11418,0.12500);">русский</div>
<svg style="left:0;top:0" width="1024" height="710">
<rect x="696.4" y="557.6" width="23" height="7.2" fill="#e4edf9" stroke="#9fb6d8" stroke-width=".5"/>
<rect x="697.8" y="558.8" width="4.4" height="4.8" fill="none" stroke="#44587a" stroke-width=".5"/><rect x="704.6" y="558.8" width="5" height="4.8" fill="none" stroke="#6a7c9a" stroke-width=".5"/><rect x="712" y="558.8" width="5" height="4.8" fill="none" stroke="#6a7c9a" stroke-width=".5"/>
<circle cx="722.6" cy="561.2" r="0" fill="none"/>
<circle cx="740.6" cy="561.2" r="2.2" fill="#eef3fa" stroke="#7d90b0" stroke-width=".5"/><path d="M739.6 561.2 L741.6 561.2" stroke="#44587a" stroke-width=".5"/>
<path d="M742.8 561.2 L787.4 561.2" stroke="#8fa6c8" stroke-width=".6"/><rect x="765.6" y="558.6" width="2" height="5" fill="#e8eef8" stroke="#8fa6c8" stroke-width=".4"/>
<circle cx="789.6" cy="561.2" r="2.2" fill="#eef3fa" stroke="#7d90b0" stroke-width=".5"/><path d="M788.6 561.2 L790.6 561.2 M789.6 560.2 L789.6 562.2" stroke="#44587a" stroke-width=".5"/>
<rect x="797.6" y="558.4" width="5.4" height="5.4" fill="#e4edf9" stroke="#9fb6d8" stroke-width=".4"/><path d="M798.4 559.2 L802.2 563 M802.2 559.2 L798.4 563" stroke="#7d90b0" stroke-width=".5"/>
</svg>
<div class="a" style="left:722.20px;top:558.77px;font-size:40px;line-height:40px;white-space:pre;color:#3a5080;font-weight:normal;font-family:'Liberation Sans',sans-serif;transform-origin:0 0;transform:scale(0.10948,0.12500);">130%</div>
<svg style="left:0;top:0" width="1024" height="710">
<rect x="799.4" y="191.2" width="6" height="6" fill="#9db6de"/><path d="M801 195.2 L802.4 193.4 L803.8 195.2 Z" fill="#34507a"/>
<rect x="799.4" y="508" width="6" height="6" fill="#9db6de"/><path d="M801 510 L802.4 511.8 L803.8 510 Z" fill="#34507a"/>
<rect x="799.4" y="514.5" width="6" height="20.5" fill="#c2d5ef"/>
<path d="M800.8 518.6 L802.4 516.8 L804 518.6 Z M800.8 519.8 L802.4 521.6 L804 519.8 Z" fill="#1a1a1a"/>
<path d="M800.8 524.4 L802.4 522.6 L804 524.4 Z M800.8 525.6 L802.4 527.4 L804 525.6 Z" fill="#1a1a1a"/>
<path d="M801.2 541.6 L802.4 540.4 L803.6 541.6 M801.2 551.4 L802.4 552.6 L803.6 551.4" fill="none" stroke="#8aa0c4" stroke-width=".6"/>
</svg>
</div>
<div class="a" style="left:842px;top:84px;width:157px;height:528.6px;background:#232323;border-radius:7px;overflow:hidden"></div>
<div class="a" style="left:884.5px;top:613px;width:71px;height:33px;background:#141414"></div>
<svg style="left:0;top:0" width="1024" height="710"><path d="M914.6 625.6 L920.4 631.2 L926.2 625.6" fill="none" stroke="#8a8a96" stroke-width="1.6"/></svg>
<div class="a" style="left:842px;top:84px;width:156px;height:87px;overflow:hidden;border-radius:7px 7px 0 0;background:radial-gradient(ellipse 60% 70% at 100% 100%,rgba(196,210,205,.85),rgba(196,210,205,0) 100%),radial-gradient(ellipse 35% 55% at 0% 100%,rgba(150,150,152,.85),rgba(150,150,152,0) 100%),linear-gradient(rgba(95,96,100,.35),rgba(95,96,100,0) 60%),linear-gradient(90deg,#68696d 0%,#6c6e72 35%,#828486 60%,#989c9c 80%,#a6acab 100%)"></div>
<svg style="left:842px;top:171px;overflow:hidden" width="156" height="88" viewBox="0 0 156 88"><defs><filter id="ab" x="-20%" y="-20%" width="140%" height="140%"><feGaussianBlur stdDeviation="0.8"/></filter><linearGradient id="awall" x1="0" x2="1"><stop offset="0" stop-color="#e2cbb6"/><stop offset=".45" stop-color="#e6d2bf"/><stop offset=".6" stop-color="#eadbcc"/><stop offset="1" stop-color="#ecdfd6"/></linearGradient><linearGradient id="ahair" x1="0" y1="0" x2="0" y2="1"><stop offset="0" stop-color="#9c5e36"/><stop offset=".5" stop-color="#b07a48"/><stop offset="1" stop-color="#c8a068"/></linearGradient></defs><rect width="156" height="88" fill="url(#awall)"/><g filter="url(#ab)"><rect x="0" y="0" width="6" height="88" fill="#e9bba6"/><rect x="6" y="0" width="30" height="88" fill="#e4ccb6"/><rect x="70" y="0" width="8" height="88" fill="#e2cab6" opacity=".6"/><circle cx="22.8" cy="16.7" r="3.8" fill="#d2d2d6" stroke="#a0a0a6" stroke-width=".6"/><rect x="37" y="17.7" width="24" height="42.3" fill="#8c6a4a"/><rect x="39" y="20" width="20" height="38" fill="#574434"/><rect x="41" y="23" width="6" height="8" fill="#e8e8ec"/><rect x="48" y="23" width="9" height="8" fill="#2e2a2a"/><rect x="41" y="35" width="8" height="5" fill="#dfe2e8"/><rect x="40" y="42" width="10" height="8" fill="#b83238"/><rect x="38" y="50" width="22" height="10" fill="#b09070"/><path d="M0 40 C6 32 14 32 20 36 C26 32 32 36 34 44 L30 52 L2 52 Z" fill="#5a7a44"/><rect x="11.6" y="48" width="14.6" height="22" fill="#7c5c40"/><rect x="26" y="58" width="17" height="10" fill="#8a6a4c"/><rect x="0" y="62" width="12" height="20" fill="#6a4a30"/><rect x="111.9" y="7.7" width="27" height="22.4" fill="#d6e0aa"/><circle cx="117" cy="21" r="2.2" fill="#e69a30"/><circle cx="122" cy="18" r="2.6" fill="#e8a030"/><circle cx="128" cy="14" r="2.4" fill="#e69a30"/><circle cx="131" cy="20" r="2" fill="#e8a838"/><circle cx="124" cy="23" r="1.8" fill="#e6a030"/><rect x="91" y="51.7" width="30" height="13" fill="#b4946f"/><rect x="84" y="38" width="8" height="14" fill="#c03038"/><rect x="92.6" y="41" width="16.2" height="10.7" fill="#dcdde0" stroke="#55585e" stroke-width=".6"/><rect x="98" y="48" width="5" height="4" fill="#333"/><rect x="146.6" y="41.7" width="12" height="11.5" fill="#d2dae2" stroke="#40444c" stroke-width=".6"/><rect x="132" y="64" width="26" height="26" fill="#9a6f4c"/><rect x="128" y="58" width="28" height="6" fill="#eeeef0"/><path d="M125 60 L150 60 L148 66 L126 66 Z" fill="#3a3e4a"/><path d="M120 64 C120 60 132 60 133 64 L134 78 L148 78 C152 78 153 84 150 88 L120 88 Z" fill="#262c3a"/><path d="M50 36 C48 22 56 14 70 14 C84 14 92 22 90 36 L92 70 L80 72 L60 72 L48 70 Z" fill="url(#ahair)"/><path d="M33 88 C34 72 42 64 56 61 L84 61 C98 64 106 72 107 88 Z" fill="#1c3a2a"/><path d="M52 60 L50 74 L60 72 L60 62 Z M80 62 L80 72 L90 74 L88 60 Z" fill="#c09458"/><path d="M57.5 36 C57.5 29 62 24 70.5 24 C79 24 83.5 29 83.5 36 L83.5 46 C83.5 55 78 60 70.5 60 C63 60 57.5 55 57.5 46 Z" fill="#e9c4ae"/><path d="M61.5 38 L67 38 M74 38 L79.5 38" stroke="#7a5448" stroke-width="1.2"/><path d="M67 51 C69 52 72 52 74 51" stroke="#c07870" stroke-width="1.2" fill="none"/></g></svg>
<svg style="left:841px;top:259px;overflow:hidden" width="159" height="91" viewBox="0 0 159 91"><defs><filter id="ob1" x="-50%" y="-50%" width="200%" height="200%"><feGaussianBlur stdDeviation="8"/></filter><filter id="ob2" x="-20%" y="-20%" width="140%" height="140%"><feGaussianBlur stdDeviation="1.3"/></filter><linearGradient id="obg" x1="0" x2="1"><stop offset="0" stop-color="#8c9ea8"/><stop offset=".3" stop-color="#9aa6aa"/><stop offset=".55" stop-color="#b0aca4"/><stop offset=".8" stop-color="#c4c4c0"/><stop offset="1" stop-color="#cdd0d0"/></linearGradient><radialGradient id="oface" cx="50%" cy="35%" r="60%"><stop offset="0" stop-color="#e2bcb0"/><stop offset=".6" stop-color="#d4a494"/><stop offset="1" stop-color="#c08e80"/></radialGradient></defs><rect width="159" height="91" fill="url(#obg)"/><g filter="url(#ob1)"><ellipse cx="18" cy="48" rx="28" ry="32" fill="#7a94a4"/><ellipse cx="40" cy="12" rx="26" ry="12" fill="#aab6ba"/><ellipse cx="138" cy="62" rx="30" ry="28" fill="#dcdfde"/><ellipse cx="125" cy="14" rx="28" ry="14" fill="#bcb2a6"/><ellipse cx="60" cy="80" rx="30" ry="14" fill="#b8c8cc"/></g><g filter="url(#ob2)"><path d="M100 91 C101 80 110 75 122 75 C134 75 140 82 142 91 Z" fill="#bfe2ec"/><path d="M66 91 L67 62 L104 62 L105 91 Z" fill="#c89a8c"/><path d="M59 30 C59 16 70 11 85.5 11 C101 11 111 16 111 30 L111 50 C111 64 99 70 85.5 70 C72 70 60 64 60 50 Z" fill="url(#oface)"/><path d="M59 30 C58 16 68 10 85.5 10 C103 10 112 16 111 30 C108 20 100 16.5 85.5 16.5 C71 16.5 62 20 59 30 Z" fill="#4e4848"/><path d="M59 28 C58.4 33 58.6 40 60 44 L61.6 43 L61.6 29 Z M111 28 C111.6 33 111.4 40 110 44 L108.4 43 L108.4 29 Z" fill="#6a5c58"/><rect x="64" y="33" width="20" height="9" rx="3" fill="#e4e2e4" stroke="#7a6e6e" stroke-width="1.2"/><rect x="87" y="33" width="22" height="9" rx="3" fill="#e4e2e4" stroke="#7a6e6e" stroke-width="1.2"/><path d="M84 36 L87 36" stroke="#7a6e6e" stroke-width="1"/><path d="M82.6 48 C83.6 51 87.6 51 88.6 48" fill="none" stroke="#b08070" stroke-width="1"/><path d="M78 57 C82 55.4 89 55.4 93 57 C89 58.6 82 58.6 78 57 Z" fill="#c08480"/></g><rect x="1" y="1" width="157" height="89" fill="none" stroke="#25e08e" stroke-width="2"/></svg>
<svg style="left:861.3px;top:436.7px;overflow:hidden" width="117.8" height="88.3" viewBox="0 0 117.8 88.3"><defs><filter id="gb" x="-20%" y="-20%" width="140%" height="140%"><feGaussianBlur stdDeviation="0.9"/></filter><linearGradient id="gw" x1="0" x2="1"><stop offset="0" stop-color="#b8b0a8"/><stop offset=".1" stop-color="#d8d2ca"/><stop offset=".3" stop-color="#efebe6"/><stop offset=".7" stop-color="#f1ede8"/><stop offset=".86" stop-color="#e8dccc"/><stop offset="1" stop-color="#e4c49c"/></linearGradient><linearGradient id="gt" x1="0" y1="0" x2="0" y2="1"><stop offset="0" stop-color="#c89070"/><stop offset=".5" stop-color="#b97c5e"/><stop offset="1" stop-color="#a86c52"/></linearGradient></defs><rect width="117.8" height="88.3" fill="url(#gw)"/><g filter="url(#gb)"><rect x="106" y="14" width="12" height="30" rx="2" fill="#f3f0ea"/><path d="M52 40 C50 20 52 4 60 1 L76 1 C84 4 86 20 85 40 L82 52 L56 52 Z" fill="#dccba4"/><path d="M57 8 C57 2 62 0 67 0 C73 0 78 2 78 8 L78 24 C78 32 72 36 67 36 C62 36 57 32 57 24 Z" fill="#d6a48c"/><path d="M60 14 L64 14 M70 14 L74 14" stroke="#7a5046" stroke-width="1.2"/><path d="M64 28 L71 28" stroke="#b06a62" stroke-width="1.4"/><path d="M20 50 C22 36 34 29 48 28 L56 30 C60 42 66 46 70 46 C76 44 80 36 82 28 L90 28 C104 30 110 36 110 50 L104 56 L28 56 Z" fill="#d42b32"/><path d="M0 50 C10 46 30 46 52 50 L62 54 L64 66 L0 67 Z" fill="#e8dddc"/><path d="M50 46 C58 44 66 48 70 54 C74 52 82 48 100 44 C110 42 117.8 44 117.8 46 L117.8 64 L50 66 Z" fill="#d9a890"/><path d="M40 54 C48 46 62 46 66 56 C66 62 60 66 50 66 L40 66 Z" fill="#e6c0b0"/><rect x="0" y="63.4" width="76" height="4.2" fill="#f5f3f7"/></g><rect x="0" y="67.3" width="117.8" height="21" fill="url(#gt)"/><rect x="0" y="66.8" width="117.8" height="1" fill="#d8b8a8" opacity=".6"/></svg>
<div class="a" style="left:844.9px;top:151.4px;width:98.80000000000007px;height:18.400000000000006px;background:rgba(38,38,38,.5);border-radius:5px"></div>
<svg style="left:0;top:0" width="1024" height="710"><g fill="#e8474a"><rect x="851.2" y="154.79999999999998" width="5" height="7.6" rx="2.5"/><path d="M849.6 160.2 a4.1 4.1 0 0 0 8.2 0" fill="none" stroke="#e8474a" stroke-width="1.2"/><rect x="853.2" y="164.2" width="1.1" height="2"/><rect x="851.0" y="166.0" width="5.4" height="1.1"/></g><path d="M847.8000000000001 167.2 L860.2 154.6" stroke="#2a2a2a" stroke-width="2.2"/><path d="M847.8000000000001 167.2 L860.2 154.6" stroke="#e8474a" stroke-width="1.1"/></svg>
<div class="a" style="left:865.20px;top:154.56px;font-size:107.2px;line-height:107.2px;white-space:pre;color:#ececec;font-weight:normal;font-family:'Liberation Sans',sans-serif;transform-origin:0 0;transform:scale(0.12099,0.12500);">Золотоноша</div>
<div class="a" style="left:845px;top:239.6px;width:112.20000000000005px;height:17.599999999999994px;background:rgba(38,38,38,.5);border-radius:5px"></div>
<svg style="left:0;top:0" width="1024" height="710"><g fill="#e8474a"><rect x="851.2" y="243.0" width="5" height="7.6" rx="2.5"/><path d="M849.6 248.4 a4.1 4.1 0 0 0 8.2 0" fill="none" stroke="#e8474a" stroke-width="1.2"/><rect x="853.2" y="252.4" width="1.1" height="2"/><rect x="851.0" y="254.20000000000002" width="5.4" height="1.1"/></g><path d="M847.8000000000001 255.4 L860.2 242.8" stroke="#2a2a2a" stroke-width="2.2"/><path d="M847.8000000000001 255.4 L860.2 242.8" stroke="#e8474a" stroke-width="1.1"/></svg>
<div class="a" style="left:865.50px;top:242.36px;font-size:107.2px;line-height:107.2px;white-space:pre;color:#ececec;font-weight:normal;font-family:'Liberation Sans',sans-serif;transform-origin:0 0;transform:scale(0.11878,0.12500);">Anna Hlukhodid</div>
<div class="a" style="left:845px;top:327.9px;width:92.89999999999998px;height:18.700000000000045px;background:rgba(38,38,38,.5);border-radius:5px"></div>
<div class="a" style="left:848.80px;top:329.96px;font-size:107.2px;line-height:107.2px;white-space:pre;color:#ececec;font-weight:normal;font-family:'Liberation Sans',sans-serif;transform-origin:0 0;transform:scale(0.11321,0.12500);">Olena Slavkova</div>
<div class="a" style="left:858.00px;top:385.85px;font-size:112px;line-height:112px;white-space:pre;color:#f2f2f2;font-weight:bold;font-family:'Liberation Sans',sans-serif;transform-origin:0 0;transform:scale(0.12770,0.12500);">В'ячеслав  Смаг...</div>
<div class="a" style="left:844.7px;top:416px;width:147.5999999999999px;height:18.69999999999999px;background:#2c2c2c;border-radius:5px"></div>
<svg style="left:0;top:0" width="1024" height="710"><g fill="#e8474a"><rect x="851.2" y="419.40000000000003" width="5" height="7.6" rx="2.5"/><path d="M849.6 424.8 a4.1 4.1 0 0 0 8.2 0" fill="none" stroke="#e8474a" stroke-width="1.2"/><rect x="853.2" y="428.8" width="1.1" height="2"/><rect x="851.0" y="430.6" width="5.4" height="1.1"/></g><path d="M847.8000000000001 431.8 L860.2 419.2" stroke="#2a2a2a" stroke-width="2.2"/><path d="M847.8000000000001 431.8 L860.2 419.2" stroke="#e8474a" stroke-width="1.1"/></svg>
<div class="a" style="left:865.00px;top:418.36px;font-size:107.2px;line-height:107.2px;white-space:pre;color:#ececec;font-weight:normal;font-family:'Liberation Sans',sans-serif;transform-origin:0 0;transform:scale(0.11564,0.12500);">В'ячеслав Смагленко</div>
<div class="a" style="left:845px;top:504.2px;width:77px;height:18.599999999999966px;background:rgba(38,38,38,.5);border-radius:5px"></div>
<div class="a" style="left:845px;top:504.2px;width:16.3px;height:18.6px;background:#2a2a2a;border-radius:5px 0 0 5px"></div>
<svg style="left:0;top:0" width="1024" height="710"><g fill="#e8474a"><rect x="851.2" y="507.6" width="5" height="7.6" rx="2.5"/><path d="M849.6 513 a4.1 4.1 0 0 0 8.2 0" fill="none" stroke="#e8474a" stroke-width="1.2"/><rect x="853.2" y="517" width="1.1" height="2"/><rect x="851.0" y="518.8" width="5.4" height="1.1"/></g><path d="M847.8000000000001 520 L860.2 507.4" stroke="#2a2a2a" stroke-width="2.2"/><path d="M847.8000000000001 520 L860.2 507.4" stroke="#e8474a" stroke-width="1.1"/></svg>
<div class="a" style="left:865.30px;top:506.36px;font-size:107.2px;line-height:107.2px;white-space:pre;color:#ececec;font-weight:normal;font-family:'Liberation Sans',sans-serif;transform-origin:0 0;transform:scale(0.11057,0.12500);">Galaxy J2</div>
<div class="a" style="left:868.70px;top:561.95px;font-size:112px;line-height:112px;white-space:pre;color:#f2f2f2;font-weight:bold;font-family:'Liberation Sans',sans-serif;transform-origin:0 0;transform:scale(0.12688,0.12500);">Віталій Ткалич</div>
<div class="a" style="left:845px;top:592px;width:105.70000000000005px;height:18.700000000000045px;background:#2c2c2c;border-radius:5px"></div>
<svg style="left:0;top:0" width="1024" height="710"><g fill="#e8474a"><rect x="851.2" y="595.4" width="5" height="7.6" rx="2.5"/><path d="M849.6 600.8 a4.1 4.1 0 0 0 8.2 0" fill="none" stroke="#e8474a" stroke-width="1.2"/><rect x="853.2" y="604.8" width="1.1" height="2"/><rect x="851.0" y="606.5999999999999" width="5.4" height="1.1"/></g><path d="M847.8000000000001 607.8 L860.2 595.1999999999999" stroke="#2a2a2a" stroke-width="2.2"/><path d="M847.8000000000001 607.8 L860.2 595.1999999999999" stroke="#e8474a" stroke-width="1.1"/></svg>
<div class="a" style="left:865.30px;top:594.26px;font-size:107.2px;line-height:107.2px;white-space:pre;color:#ececec;font-weight:normal;font-family:'Liberation Sans',sans-serif;transform-origin:0 0;transform:scale(0.11283,0.12500);">Віталій Ткалич</div>
<div class="a" style="left:809.2px;top:362px;width:2px;height:26px;background:#6e6e6e;border-radius:1px"></div>
<div class="a" style="left:812px;top:362px;width:2px;height:26px;background:#6e6e6e;border-radius:1px"></div>
<div class="a" style="left:26.5px;top:548px;width:30px;height:30px;border-radius:50%;background:#27272a"></div>
<svg style="left:0;top:0" width="1024" height="710"><path d="M34 565 L43.6 555.4 L46.6 558.4 L37 568 L34 568 Z M41.8 557.2 L44.8 560.2" fill="none" stroke="#19d97a" stroke-width="1.2" stroke-linejoin="round"/><path d="M34.6 570.6 L48 570.6" stroke="#19d97a" stroke-width="1.2"/></svg>
<div class="a" style="left:0;top:653px;width:1024px;height:57px;background:#000"></div>
<div class="a" style="left:35.50px;top:690.84px;font-size:96px;line-height:96px;white-space:pre;color:#d8d8d8;font-weight:normal;font-family:'Liberation Sans',sans-serif;transform-origin:0 0;transform:scale(0.12667,0.12500);-webkit-text-stroke:1.6px #d8d8d8;">Audio</div>
<div class="a" style="left:126.30px;top:690.84px;font-size:96px;line-height:96px;white-space:pre;color:#d8d8d8;font-weight:normal;font-family:'Liberation Sans',sans-serif;transform-origin:0 0;transform:scale(0.12265,0.12500);-webkit-text-stroke:1.6px #d8d8d8;">Video</div>
<div class="a" style="left:282.60px;top:690.84px;font-size:96px;line-height:96px;white-space:pre;color:#d8d8d8;font-weight:normal;font-family:'Liberation Sans',sans-serif;transform-origin:0 0;transform:scale(0.12043,0.12500);-webkit-text-stroke:1.6px #d8d8d8;">Participants</div>
<div class="a" style="left:408.30px;top:690.84px;font-size:96px;line-height:96px;white-space:pre;color:#d8d8d8;font-weight:normal;font-family:'Liberation Sans',sans-serif;transform-origin:0 0;transform:scale(0.11442,0.12500);-webkit-text-stroke:1.6px #d8d8d8;">Chat</div>
<div class="a" style="left:488.50px;top:690.84px;font-size:96px;line-height:96px;white-space:pre;color:#d8d8d8;font-weight:normal;font-family:'Liberation Sans',sans-serif;transform-origin:0 0;transform:scale(0.11405,0.12500);-webkit-text-stroke:1.6px #d8d8d8;">React</div>
<div class="a" style="left:575.50px;top:690.84px;font-size:96px;line-height:96px;white-space:pre;color:#d8d8d8;font-weight:normal;font-family:'Liberation Sans',sans-serif;transform-origin:0 0;transform:scale(0.11516,0.12500);-webkit-text-stroke:1.6px #d8d8d8;">Share</div>
<div class="a" style="left:651.70px;top:690.84px;font-size:96px;line-height:96px;white-space:pre;color:#d8d8d8;font-weight:normal;font-family:'Liberation Sans',sans-serif;transform-origin:0 0;transform:scale(0.12253,0.12500);-webkit-text-stroke:1.6px #d8d8d8;">Host tools</div>
<div class="a" style="left:742.20px;top:690.84px;font-size:96px;line-height:96px;white-space:pre;color:#d8d8d8;font-weight:normal;font-family:'Liberation Sans',sans-serif;transform-origin:0 0;transform:scale(0.12020,0.12500);-webkit-text-stroke:1.6px #d8d8d8;">Apps</div>
<div class="a" style="left:823.00px;top:690.84px;font-size:96px;line-height:96px;white-space:pre;color:#d8d8d8;font-weight:normal;font-family:'Liberation Sans',sans-serif;transform-origin:0 0;transform:scale(0.12346,0.12500);-webkit-text-stroke:1.6px #d8d8d8;">More</div>
<div class="a" style="left:967.90px;top:690.84px;font-size:96px;line-height:96px;white-space:pre;color:#d8d8d8;font-weight:normal;font-family:'Liberation Sans',sans-serif;transform-origin:0 0;transform:scale(0.10890,0.12500);-webkit-text-stroke:1.6px #d8d8d8;">End</div>
<svg style="left:0;top:0" width="1024" height="710"><path d="M79.0 677 L82.4 673.2 L85.80000000000001 677" fill="none" stroke="#bdbdbd" stroke-width="1.4"/><path d="M174.79999999999998 677 L178.2 673.2 L181.6 677" fill="none" stroke="#bdbdbd" stroke-width="1.4"/><path d="M361.0 677 L364.4 673.2 L367.79999999999995 677" fill="none" stroke="#bdbdbd" stroke-width="1.4"/><path d="M448.90000000000003 677 L452.3 673.2 L455.7 677" fill="none" stroke="#bdbdbd" stroke-width="1.4"/><path d="M527.2 677 L530.6 673.2 L534.0 677" fill="none" stroke="#bdbdbd" stroke-width="1.4"/><path d="M623.0 677 L626.4 673.2 L629.8 677" fill="none" stroke="#bdbdbd" stroke-width="1.4"/><path d="M779.6 677 L783 673.2 L786.4 677" fill="none" stroke="#bdbdbd" stroke-width="1.4"/><g fill="none" stroke="#d9d9d9" stroke-width="1.6"><rect x="47" y="663.2" width="8" height="14.6" rx="4"/><path d="M44 673.5 a7 7 0 0 0 14 0"/><path d="M51 680.5 L51 685.6 M47.2 685.6 L55 685.6"/></g><path d="M40 685.6 L62.2 663.4" stroke="#000" stroke-width="3.6"/><path d="M40 685.6 L62.2 663.4" stroke="#eb2263" stroke-width="2.1" stroke-linecap="round"/><g fill="none" stroke="#d9d9d9" stroke-width="1.7" stroke-linejoin="round"><rect x="130.7" y="669.4" width="15.4" height="12.9" rx="3"/><path d="M146.1 673.6 L153.4 669.8 L153.4 681.8 L146.1 678 Z"/></g><g fill="none" stroke="#d9d9d9" stroke-width="1.6"><circle cx="308.6" cy="669.6" r="2.6"/><circle cx="316.2" cy="672.8" r="2.5"/><path d="M310.4 682.6 L306 682.6 a2.4 2.4 0 0 1 -2.4 -2.4 a4.9 4.9 0 0 1 8.4 -3.3"/><rect x="311.2" y="676.4" width="9.6" height="6.4" rx="3.2"/></g><g fill="none" stroke="#d9d9d9" stroke-width="1.6" stroke-linejoin="round"><path d="M414.8 668.6 L414.8 666.4 a2 2 0 0 1 2 -2 L428.8 664.6 a2 2 0 0 1 2 2 L430.6 675 a2.2 2.2 0 0 1 -2.2 2.2 L426 677.2"/><path d="M416.6 669.2 a7.4 6.6 0 1 1 -1 12.8 L411.4 684.6 L412.2 680.2 a7.4 6.6 0 0 1 4.4 -11 z"/></g><g fill="#d9d9d9"><circle cx="413.2" cy="675.6" r="1"/><circle cx="416.8" cy="675.6" r="1"/><circle cx="420.4" cy="675.6" r="1"/></g><path d="M494.4 675.8 C489.6 671.6 491.6 664.6 497.6 665.2 C500.4 665.5 501.9 667.6 502.6 669.4 C504.4 667 507.4 665.6 510.4 666.8 C516 669.2 515.4 676.2 509 679.2 L500.4 684 Z" fill="none" stroke="#d9d9d9" stroke-width="1.6" stroke-linejoin="round"/><rect x="578.1" y="665" width="24.1" height="19" rx="3.2" fill="#20e396"/><path d="M590.1 680.6 L590.1 670 M585.6 674.2 L590.1 669.6 L594.6 674.2" fill="none" stroke="#000" stroke-width="2.1"/><path d="M677.2 666.6 C680 668.2 682.6 668.8 686 668.8 L686 674.6 C686 679.2 682.2 682.4 677.2 684.2 C672.2 682.4 668.4 679.2 668.4 674.6 L668.4 668.8 C671.8 668.8 674.4 668.2 677.2 666.6 Z" fill="none" stroke="#d9d9d9" stroke-width="1.6"/><path d="M677.2 669.4 L677.2 675 L670.6 675 L670.6 669.8 C673 669.8 675 669.6 677.2 669.4 Z M677.2 675 L683.8 675 C683.6 678.6 680.8 680.8 677.2 682 Z" fill="#d9d9d9"/><g fill="none" stroke="#d9d9d9" stroke-width="1.7"><path d="M746.4 672 L746.4 668.2 a3 3 0 0 1 3 -3 L753.2 665.2"/><path d="M765.4 677.4 L765.4 681.2 a3 3 0 0 1 -3 3 L758.6 684.2"/><circle cx="761" cy="669.6" r="3.8"/><circle cx="750.8" cy="679.6" r="3.8"/></g><circle cx="836" cy="674.7" r="11.2" fill="none" stroke="#d9d9d9" stroke-width="1.7"/><g fill="#d9d9d9"><circle cx="831" cy="674.9" r="1.3"/><circle cx="836" cy="674.9" r="1.3"/><circle cx="841" cy="674.9" r="1.3"/></g><path d="M970.9 665 L983.1 665 L988 674.6 L983.1 684.2 L970.9 684.2 L966 674.6 Z" fill="none" stroke="#e3094f" stroke-width="1.7" stroke-linejoin="round"/><path d="M973.4 670.8 L980.8 678.6 M980.8 670.8 L973.4 678.6" stroke="#fff" stroke-width="2.6" stroke-linecap="round"/></svg>
</body></html>
